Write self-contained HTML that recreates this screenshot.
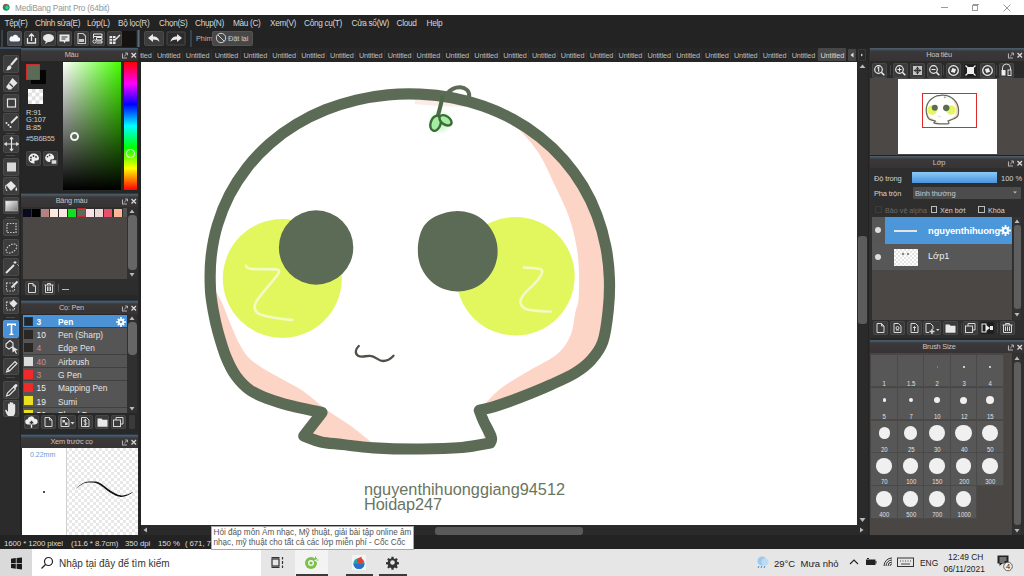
<!DOCTYPE html>
<html><head><meta charset="utf-8"><title>MediBang</title>
<style>
*{margin:0;padding:0;box-sizing:border-box}
html,body{width:1024px;height:576px;overflow:hidden}
body{position:relative;background:#232323;font-family:"Liberation Sans", sans-serif;color:#ddd}
.a{position:absolute}
.t{position:absolute;white-space:nowrap;line-height:1}
.btn{position:absolute;background:#3d3d3d;border-radius:2px;box-shadow:inset 0 0 0 1px rgba(255,255,255,0.07)}
.ph{position:absolute;background:linear-gradient(to bottom,#4d5f6d 0px,#44515c 1.5px,#3b393b 3px,#3a3537 8px,#363434 100%)}
.pht{position:absolute;white-space:nowrap;line-height:1;font-size:7.4px;color:#c4c4c4;text-align:center;letter-spacing:-0.25px}
svg{position:absolute;overflow:visible}
</style></head><body>

<div class="a" style="left:0;top:0;width:1024px;height:15px;background:#fff"></div>
<svg style="left:2px;top:3px" width="10" height="10" viewBox="0 0 10 10"><circle cx="4.2" cy="4.3" r="3.4" fill="#17905a"/><path d="M1 3.5A3.4 3.4 0 0 1 5 .9L4.5 3z" fill="#b84a3c"/><ellipse cx="5" cy="4.5" rx="1.6" ry="1.9" fill="#35c8a4"/></svg>
<div class="t" style="left:15px;top:3.5px;font-size:8.3px;color:#959595;letter-spacing:-0.2px">MediBang Paint Pro (64bit)</div>
<div class="a" style="left:941px;top:7px;width:7px;height:1px;background:#9a9a9a"></div>
<div class="a" style="left:972px;top:5px;width:6px;height:6px;border:1px solid #9a9a9a"></div>
<div class="a" style="left:973px;top:4px;width:6px;height:1px;background:#9a9a9a"></div>
<svg style="left:1003px;top:4px" width="8" height="8"><path d="M0.5 0.5L7.5 7.5M7.5 0.5L0.5 7.5" stroke="#9a9a9a" stroke-width="1"/></svg>
<div class="t" style="left:4.5px;top:19px;font-size:8.3px;color:#d6d6d6;letter-spacing:-0.35px">Tệp(F)</div>
<div class="t" style="left:35px;top:19px;font-size:8.3px;color:#d6d6d6;letter-spacing:-0.35px">Chỉnh sửa(E)</div>
<div class="t" style="left:87px;top:19px;font-size:8.3px;color:#d6d6d6;letter-spacing:-0.35px">Lớp(L)</div>
<div class="t" style="left:118px;top:19px;font-size:8.3px;color:#d6d6d6;letter-spacing:-0.35px">Bộ lọc(R)</div>
<div class="t" style="left:159px;top:19px;font-size:8.3px;color:#d6d6d6;letter-spacing:-0.35px">Chọn(S)</div>
<div class="t" style="left:195px;top:19px;font-size:8.3px;color:#d6d6d6;letter-spacing:-0.35px">Chụp(N)</div>
<div class="t" style="left:233px;top:19px;font-size:8.3px;color:#d6d6d6;letter-spacing:-0.35px">Màu (C)</div>
<div class="t" style="left:270px;top:19px;font-size:8.3px;color:#d6d6d6;letter-spacing:-0.35px">Xem(V)</div>
<div class="t" style="left:304px;top:19px;font-size:8.3px;color:#d6d6d6;letter-spacing:-0.35px">Công cụ(T)</div>
<div class="t" style="left:351.5px;top:19px;font-size:8.3px;color:#d6d6d6;letter-spacing:-0.35px">Cửa sổ(W)</div>
<div class="t" style="left:396.5px;top:19px;font-size:8.3px;color:#d6d6d6;letter-spacing:-0.35px">Cloud</div>
<div class="t" style="left:426.5px;top:19px;font-size:8.3px;color:#d6d6d6;letter-spacing:-0.35px">Help</div>
<div class="a" style="left:1px;top:30px;width:2px;height:17px;background:#34434e"></div>
<div class="btn" style="left:7px;top:31px;width:15px;height:15px;background:#474b52"></div>
<div class="btn" style="left:24px;top:31px;width:15px;height:15px;background:#3b3b3b"></div>
<div class="btn" style="left:40.5px;top:31px;width:15px;height:15px;background:#3b3b3b"></div>
<div class="btn" style="left:57px;top:31px;width:15px;height:15px;background:#3b3b3b"></div>
<div class="btn" style="left:73.5px;top:31px;width:15px;height:15px;background:#3b3b3b"></div>
<div class="btn" style="left:90px;top:31px;width:15px;height:15px;background:#3b3b3b"></div>
<div class="btn" style="left:106.5px;top:31px;width:15px;height:15px;background:#3b3b3b"></div>
<svg style="left:7px;top:31px" width="15" height="15"><path d="M4.5 10.5h6.5a2.1 2.1 0 0 0 .2-4.2 3 3 0 0 0-5.6-.9A2.6 2.6 0 0 0 4.5 10.5z" fill="#f4f8ff"/></svg>
<svg style="left:24px;top:31px" width="15" height="15" fill="none" stroke="#e8e8e8" stroke-width="1.3"><path d="M3.5 7v5h8V7M7.5 10V3M5 5.5l2.5-2.5 2.5 2.5"/></svg>
<svg style="left:40.5px;top:31px" width="15" height="15"><ellipse cx="7.5" cy="7" rx="5.5" ry="4" fill="#e8e8e8"/><path d="M5 10l-1 3 3-2z" fill="#e8e8e8"/></svg>
<svg style="left:57px;top:31px" width="15" height="15"><path d="M2.5 3.5h10v7h-4l-1 2-1-2h-4z" fill="#e8e8e8"/><path d="M4.5 6h6M4.5 8h4" stroke="#3b3b3b" stroke-width="1"/></svg>
<svg style="left:73.5px;top:31px" width="15" height="15" fill="none" stroke="#c8c8c8" stroke-width="1.1"><path d="M4 2.5h5l2.5 2.5v7.5H4z"/><path d="M5.5 8.5h4v2h-4z" fill="#c8c8c8"/></svg>
<svg style="left:90px;top:31px" width="15" height="15" fill="none" stroke="#e8e8e8" stroke-width="1"><path d="M3.5 3h8.5v2.5H3.5zM6.5 6.5h5.5V9H6.5zM6.5 10h5.5v2H6.5M3.5 5.5v2"/><circle cx="4.5" cy="10.5" r="1.6"/></svg>
<svg style="left:106.5px;top:31px" width="15" height="15"><path d="M2.5 5h6v8h-6z" fill="#e8e8e8"/><path d="M2.5 7.5h6M2.5 10.2h6M5.5 5v8" stroke="#3b3b3b" stroke-width="0.8"/><path d="M8 9l5-5" stroke="#e8e8e8" stroke-width="1.5"/></svg>
<div class="a" style="left:122px;top:30.7px;width:14px;height:16px;background:#141312"></div>
<div class="a" style="left:136.5px;top:30px;width:3px;height:17px;background:linear-gradient(to right,#2c3a40,#5a6e78,#2c3a44)"></div>
<div class="btn" style="left:144px;top:31px;width:20px;height:15px;background:#3d3d3d"></div>
<div class="btn" style="left:166px;top:31px;width:20px;height:15px;background:#2c2c2c;border:1px solid #383838"></div>
<svg style="left:144px;top:31px" width="20" height="15"><path d="M4 7l5-4v2.5c4 0 6 2 6.5 5.5-1.5-2-3.5-2.6-6.5-2.6V11z" fill="#ececec"/></svg>
<svg style="left:166px;top:31px" width="20" height="15"><path d="M16 7l-5-4v2.5c-4 0-6 2-6.5 5.5 1.5-2 3.5-2.6 6.5-2.6V11z" fill="#ececec"/></svg>
<div class="a" style="left:190px;top:30px;width:2px;height:17px;background:#34434e"></div>
<div class="t" style="left:196px;top:35px;font-size:7.4px;color:#b8b8b8;letter-spacing:-0.2px">Phím</div>
<div class="btn" style="left:212px;top:31px;width:41px;height:15px;background:#484848"></div>
<svg style="left:215px;top:32px" width="12" height="12" fill="none" stroke="#d0d0d0" stroke-width="1"><circle cx="6" cy="6" r="4.7"/><path d="M2.7 2.7l6.6 6.6"/></svg>
<div class="t" style="left:228px;top:35px;font-size:7.6px;color:#c8c8c8;letter-spacing:-0.2px">Đặt lại</div>
<div class="a" style="left:140px;top:48px;width:729px;height:14px;background:#262626"></div>
<div class="a" style="left:817.5px;top:48px;width:28px;height:13px;background:#474747;border-radius:1px"></div>
<div class="a" style="left:816.65px;top:50px;width:1px;height:10px;background:#303030"></div>
<div class="a" style="left:787.8px;top:50px;width:1px;height:10px;background:#303030"></div>
<div class="a" style="left:758.9499999999999px;top:50px;width:1px;height:10px;background:#303030"></div>
<div class="a" style="left:730.0999999999999px;top:50px;width:1px;height:10px;background:#303030"></div>
<div class="a" style="left:701.2499999999999px;top:50px;width:1px;height:10px;background:#303030"></div>
<div class="a" style="left:672.3999999999999px;top:50px;width:1px;height:10px;background:#303030"></div>
<div class="a" style="left:643.5499999999998px;top:50px;width:1px;height:10px;background:#303030"></div>
<div class="a" style="left:614.6999999999998px;top:50px;width:1px;height:10px;background:#303030"></div>
<div class="a" style="left:585.8499999999998px;top:50px;width:1px;height:10px;background:#303030"></div>
<div class="a" style="left:556.9999999999998px;top:50px;width:1px;height:10px;background:#303030"></div>
<div class="a" style="left:528.1499999999997px;top:50px;width:1px;height:10px;background:#303030"></div>
<div class="a" style="left:499.2999999999997px;top:50px;width:1px;height:10px;background:#303030"></div>
<div class="a" style="left:470.4499999999997px;top:50px;width:1px;height:10px;background:#303030"></div>
<div class="a" style="left:441.5999999999997px;top:50px;width:1px;height:10px;background:#303030"></div>
<div class="a" style="left:412.74999999999966px;top:50px;width:1px;height:10px;background:#303030"></div>
<div class="a" style="left:383.89999999999964px;top:50px;width:1px;height:10px;background:#303030"></div>
<div class="a" style="left:355.0499999999996px;top:50px;width:1px;height:10px;background:#303030"></div>
<div class="a" style="left:326.1999999999996px;top:50px;width:1px;height:10px;background:#303030"></div>
<div class="a" style="left:297.34999999999957px;top:50px;width:1px;height:10px;background:#303030"></div>
<div class="a" style="left:268.49999999999955px;top:50px;width:1px;height:10px;background:#303030"></div>
<div class="a" style="left:239.64999999999958px;top:50px;width:1px;height:10px;background:#303030"></div>
<div class="a" style="left:210.79999999999959px;top:50px;width:1px;height:10px;background:#303030"></div>
<div class="a" style="left:181.9499999999996px;top:50px;width:1px;height:10px;background:#303030"></div>
<div class="a" style="left:153.0999999999996px;top:50px;width:1px;height:10px;background:#303030"></div>
<div class="a" style="left:140px;top:48px;width:707px;height:14px;overflow:hidden"><div class="t" style="left:680.5px;top:4px;font-size:7.3px;color:#d4d4d4;letter-spacing:-0.15px">Untitled</div><div class="t" style="left:651.65px;top:4px;font-size:7.3px;color:#bdbdbd;letter-spacing:-0.15px">Untitled</div><div class="t" style="left:622.8px;top:4px;font-size:7.3px;color:#bdbdbd;letter-spacing:-0.15px">Untitled</div><div class="t" style="left:593.9499999999999px;top:4px;font-size:7.3px;color:#bdbdbd;letter-spacing:-0.15px">Untitled</div><div class="t" style="left:565.0999999999999px;top:4px;font-size:7.3px;color:#bdbdbd;letter-spacing:-0.15px">Untitled</div><div class="t" style="left:536.2499999999999px;top:4px;font-size:7.3px;color:#bdbdbd;letter-spacing:-0.15px">Untitled</div><div class="t" style="left:507.39999999999986px;top:4px;font-size:7.3px;color:#bdbdbd;letter-spacing:-0.15px">Untitled</div><div class="t" style="left:478.54999999999984px;top:4px;font-size:7.3px;color:#bdbdbd;letter-spacing:-0.15px">Untitled</div><div class="t" style="left:449.6999999999998px;top:4px;font-size:7.3px;color:#bdbdbd;letter-spacing:-0.15px">Untitled</div><div class="t" style="left:420.8499999999998px;top:4px;font-size:7.3px;color:#bdbdbd;letter-spacing:-0.15px">Untitled</div><div class="t" style="left:391.9999999999998px;top:4px;font-size:7.3px;color:#bdbdbd;letter-spacing:-0.15px">Untitled</div><div class="t" style="left:363.14999999999975px;top:4px;font-size:7.3px;color:#bdbdbd;letter-spacing:-0.15px">Untitled</div><div class="t" style="left:334.2999999999997px;top:4px;font-size:7.3px;color:#bdbdbd;letter-spacing:-0.15px">Untitled</div><div class="t" style="left:305.4499999999997px;top:4px;font-size:7.3px;color:#bdbdbd;letter-spacing:-0.15px">Untitled</div><div class="t" style="left:276.5999999999997px;top:4px;font-size:7.3px;color:#bdbdbd;letter-spacing:-0.15px">Untitled</div><div class="t" style="left:247.74999999999966px;top:4px;font-size:7.3px;color:#bdbdbd;letter-spacing:-0.15px">Untitled</div><div class="t" style="left:218.89999999999964px;top:4px;font-size:7.3px;color:#bdbdbd;letter-spacing:-0.15px">Untitled</div><div class="t" style="left:190.0499999999996px;top:4px;font-size:7.3px;color:#bdbdbd;letter-spacing:-0.15px">Untitled</div><div class="t" style="left:161.1999999999996px;top:4px;font-size:7.3px;color:#bdbdbd;letter-spacing:-0.15px">Untitled</div><div class="t" style="left:132.34999999999957px;top:4px;font-size:7.3px;color:#bdbdbd;letter-spacing:-0.15px">Untitled</div><div class="t" style="left:103.49999999999957px;top:4px;font-size:7.3px;color:#bdbdbd;letter-spacing:-0.15px">Untitled</div><div class="t" style="left:74.64999999999958px;top:4px;font-size:7.3px;color:#bdbdbd;letter-spacing:-0.15px">Untitled</div><div class="t" style="left:45.799999999999585px;top:4px;font-size:7.3px;color:#bdbdbd;letter-spacing:-0.15px">Untitled</div><div class="t" style="left:16.94999999999959px;top:4px;font-size:7.3px;color:#bdbdbd;letter-spacing:-0.15px">Untitled</div><div class="t" style="left:-11.900000000000404px;top:4px;font-size:7.3px;color:#bdbdbd;letter-spacing:-0.15px">Untitled</div></div>
<div class="a" style="left:847.5px;top:49px;width:8px;height:11.5px;background:#464646;border-radius:1px"></div>
<svg style="left:847.5px;top:49px" width="8" height="12"><path d="M5.5 3.5v5L2.5 6z" fill="#e0e0e0"/></svg>
<div class="a" style="left:858px;top:49px;width:8px;height:11.5px;background:#2a2a2a;border:1px solid #3a3a3a;border-radius:1px"></div>
<svg style="left:858px;top:49px" width="8" height="12"><path d="M3 4.5v3L5 6z" fill="#d0d0d0"/></svg>
<div class="a" style="left:141px;top:62px;width:716px;height:463px;background:#fff"></div>
<div class="a" style="left:857px;top:62px;width:11px;height:463px;background:#2a2a2a"></div>
<svg style="left:857px;top:62px" width="11" height="8"><path d="M2.5 6h6L5.5 2.5z" fill="#bbb"/></svg>
<div class="a" style="left:858px;top:235.5px;width:8.5px;height:88.5px;background:#5c5c5c;border-radius:3px"></div>
<svg style="left:857px;top:514px" width="11" height="11"><path d="M2.5 4h6L5.5 8z" fill="#bbb"/></svg>
<div class="a" style="left:141px;top:525px;width:727px;height:10px;background:#2a2a2a"></div>
<svg style="left:141px;top:525px" width="8" height="10"><path d="M6 2.5v5L2.5 5z" fill="#bbb"/></svg>
<div class="a" style="left:435px;top:526.5px;width:148px;height:8px;background:#5a5a5a;border-radius:3px"></div>
<svg style="left:857px;top:525px" width="11" height="10"><path d="M3 2.5v5L6.5 5z" fill="#bbb"/></svg>
<div class="a" style="left:0;top:47px;width:21px;height:1.5px;background:#3f5060"></div>
<div class="a" style="left:0;top:48.5px;width:20px;height:486px;background:#2b2b2b"></div>
<div class="btn" style="left:2.5px;top:55px;width:16.5px;height:17.5px;background:#3d3d3d;border-radius:2px"></div>
<div class="btn" style="left:2.5px;top:74.8px;width:16.5px;height:17.5px;background:#3d3d3d;border-radius:2px"></div>
<div class="btn" style="left:2.5px;top:94px;width:16.5px;height:17.5px;background:#3d3d3d;border-radius:2px"></div>
<div class="btn" style="left:2.5px;top:113px;width:16.5px;height:17.5px;background:#3d3d3d;border-radius:2px"></div>
<div class="btn" style="left:2.5px;top:135px;width:16.5px;height:17.5px;background:#3d3d3d;border-radius:2px"></div>
<div class="btn" style="left:2.5px;top:158px;width:16.5px;height:17.5px;background:#3d3d3d;border-radius:2px"></div>
<div class="btn" style="left:2.5px;top:177px;width:16.5px;height:17.5px;background:#3d3d3d;border-radius:2px"></div>
<div class="btn" style="left:2.5px;top:196.5px;width:16.5px;height:17.5px;background:#3d3d3d;border-radius:2px"></div>
<div class="btn" style="left:2.5px;top:218.5px;width:16.5px;height:17.5px;background:#3d3d3d;border-radius:2px"></div>
<div class="btn" style="left:2.5px;top:238.5px;width:16.5px;height:17.5px;background:#3d3d3d;border-radius:2px"></div>
<div class="btn" style="left:2.5px;top:258px;width:16.5px;height:17.5px;background:#3d3d3d;border-radius:2px"></div>
<div class="btn" style="left:2.5px;top:277.5px;width:16.5px;height:17.5px;background:#3d3d3d;border-radius:2px"></div>
<div class="btn" style="left:2.5px;top:296.7px;width:16.5px;height:17.5px;background:#3d3d3d;border-radius:2px"></div>
<div class="btn" style="left:2.5px;top:320px;width:16.5px;height:17.5px;background:#4a90d6;border-radius:2px"></div>
<div class="btn" style="left:2.5px;top:338px;width:16.5px;height:17.5px;background:#3d3d3d;border-radius:2px"></div>
<div class="btn" style="left:2.5px;top:357.8px;width:16.5px;height:17.5px;background:#3d3d3d;border-radius:2px"></div>
<div class="btn" style="left:2.5px;top:381px;width:16.5px;height:17.5px;background:#3d3d3d;border-radius:2px"></div>
<div class="btn" style="left:2.5px;top:399.5px;width:16.5px;height:17.5px;background:#3d3d3d;border-radius:2px"></div>
<div class="a" style="left:6px;top:132.5px;width:9px;height:1px;background:#4a4a4a"></div>
<div class="a" style="left:6px;top:155.3px;width:9px;height:1px;background:#4a4a4a"></div>
<div class="a" style="left:6px;top:216.5px;width:9px;height:1px;background:#4a4a4a"></div>
<div class="a" style="left:6px;top:316.5px;width:9px;height:1px;background:#4a4a4a"></div>
<div class="a" style="left:6px;top:377px;width:9px;height:1px;background:#4a4a4a"></div>
<svg style="left:2.5px;top:55px" width="17" height="18" viewBox="0 0 17 18"><path d="M14 3L8 10" stroke="#e6e6e6" stroke-width="2"/><path d="M7.5 10.2c-2 0-3.5 1.2-3.5 3.6 0 .5-.7.9-1.3 1.1 2.4.8 5.5-.2 5.8-2.3z" fill="#e6e6e6"/></svg>
<svg style="left:2.5px;top:74.8px" width="17" height="18" viewBox="0 0 17 18"><path d="M9.5 3l5 5-6.5 6.5H5.5L3 12z" fill="#e6e6e6"/><path d="M6.5 8.5l3.5 3.5" stroke="#3d3d3d" stroke-width="1.3"/></svg>
<svg style="left:2.5px;top:94px" width="17" height="18" viewBox="0 0 17 18"><rect x="4.5" y="5" width="8" height="8" fill="none" stroke="#e6e6e6" stroke-width="1.2"/></svg>
<svg style="left:2.5px;top:113px" width="17" height="18" viewBox="0 0 17 18"><path d="M14.5 3.5L8 10" stroke="#e6e6e6" stroke-width="1.8"/><circle cx="3.5" cy="10" r="1" fill="#e6e6e6"/><circle cx="5.5" cy="12" r="1" fill="#e6e6e6"/><circle cx="7.5" cy="14" r="1" fill="#e6e6e6"/></svg>
<svg style="left:2.5px;top:135px" width="17" height="18" viewBox="0 0 17 18"><path d="M8.5 2v14M1.5 9h14" stroke="#e6e6e6" stroke-width="1.2"/><path d="M8.5 1.5l-2.3 2.8h4.6zM8.5 16.5l-2.3-2.8h4.6zM1 9l2.8-2.3v4.6zM16 9l-2.8-2.3v4.6z" fill="#e6e6e6"/></svg>
<svg style="left:2.5px;top:158px" width="17" height="18" viewBox="0 0 17 18"><rect x="4" y="4.5" width="9" height="9" fill="#d8d8d8"/></svg>
<svg style="left:2.5px;top:177px" width="17" height="18" viewBox="0 0 17 18"><path d="M3 8l5-4 5 5-5 5z" fill="#e6e6e6"/><path d="M3 8c-1 3 0 4 1 6" stroke="#e6e6e6" stroke-width="1" fill="none"/><path d="M13 10c1 1 1.5 2.5 1 3.5-.6.8-1.6.2-1.6-.8z" fill="#e6e6e6"/></svg>
<svg style="left:2.5px;top:196.5px" width="17" height="18" viewBox="0 0 17 18"><defs><linearGradient id="gr1" x1="0" y1="0" x2="1" y2="1"><stop offset="0" stop-color="#fafafa"/><stop offset="1" stop-color="#777"/></linearGradient></defs><rect x="2.5" y="4" width="12" height="10" fill="url(#gr1)" stroke="#bbb" stroke-width=".6"/></svg>
<svg style="left:2.5px;top:218.5px" width="17" height="18" viewBox="0 0 17 18"><rect x="4" y="4.5" width="9" height="9" fill="none" stroke="#cfcfcf" stroke-width="1.2" stroke-dasharray="1.5 1.3"/></svg>
<svg style="left:2.5px;top:238.5px" width="17" height="18" viewBox="0 0 17 18"><ellipse cx="8.5" cy="9.5" rx="6" ry="3.6" transform="rotate(-35 8.5 9.5)" fill="none" stroke="#cfcfcf" stroke-width="1.1" stroke-dasharray="1.5 1.2"/></svg>
<svg style="left:2.5px;top:258px" width="17" height="18" viewBox="0 0 17 18"><path d="M3 15l8-8" stroke="#e6e6e6" stroke-width="1.8"/><path d="M12 3v3M10.5 4.5h3M14.5 6.5l1 1" stroke="#e6e6e6" stroke-width="1"/></svg>
<svg style="left:2.5px;top:277.5px" width="17" height="18" viewBox="0 0 17 18"><rect x="3.5" y="5" width="8" height="8" fill="none" stroke="#cfcfcf" stroke-width="1.1" stroke-dasharray="1.5 1.3"/><path d="M14.5 3.5L8.5 9.5" stroke="#e6e6e6" stroke-width="1.8"/></svg>
<svg style="left:2.5px;top:296.7px" width="17" height="18" viewBox="0 0 17 18"><rect x="3.5" y="5" width="8" height="8" fill="none" stroke="#cfcfcf" stroke-width="1.1" stroke-dasharray="1.5 1.3"/><path d="M10.5 2.5l4 4-4 4-4-4z" fill="#e6e6e6"/></svg>
<svg style="left:2.5px;top:320px" width="17" height="18" viewBox="0 0 17 18"><path d="M4 3.5h9v2.5h-1.2l-.4-1H9.3v8.5l1.3.4V15H6.4v-1.1l1.3-.4V5H5.6l-.4 1H4z" fill="#fff"/></svg>
<svg style="left:2.5px;top:338px" width="17" height="18" viewBox="0 0 17 18"><path d="M3 6l4-3.5 3 2.5v3.5L6 11 3 9z" fill="none" stroke="#e6e6e6" stroke-width="1.1"/><path d="M9 8l6 4-2.5.5 1.5 3-1 .5-1.5-3-2 1.5z" fill="#e6e6e6"/></svg>
<svg style="left:2.5px;top:357.8px" width="17" height="18" viewBox="0 0 17 18"><path d="M3.5 14l1-3L12 3.5l2 2L6.5 13z" fill="none" stroke="#e6e6e6" stroke-width="1.1"/><path d="M4.5 11l2 2" stroke="#e6e6e6" stroke-width="1.1"/></svg>
<svg style="left:2.5px;top:381px" width="17" height="18" viewBox="0 0 17 18"><path d="M3.5 15l1-3 6-6 2 2-6 6z" fill="none" stroke="#e6e6e6" stroke-width="1.1"/><path d="M10 5.5l2-2a1.4 1.4 0 0 1 2 2l-2 2z" fill="#e6e6e6"/></svg>
<svg style="left:2.5px;top:399.5px" width="17" height="18" viewBox="0 0 17 18"><path d="M5 16c-1.5-2-2.5-4-2.8-5.5-.2-.8.8-1.2 1.3-.5L5 12V4.5a.9.9 0 0 1 1.8 0V9V2.8a.9.9 0 0 1 1.8 0V9V3.5a.9.9 0 0 1 1.8 0V9.5V5a.9.9 0 0 1 1.8 0v6.5c0 2-.8 3.5-1.8 4.5z" fill="#e6e6e6"/></svg>
<div class="a" style="left:21px;top:48px;width:118px;height:487px;background:#282828"></div>
<div class="ph" style="left:21px;top:48px;width:117px;height:12.5px"></div>
<div class="pht" style="left:21px;top:51px;width:101px">Màu</div>
<svg style="left:121px;top:51.5px" width="16" height="7"><path d="M1.5 1.5v4.5h4.5" fill="none" stroke="#b0b0b0" stroke-width="1.1"/><path d="M3.2 4.3L6 1.5M4.2 1h2.3v2.3" fill="none" stroke="#b0b0b0" stroke-width="1"/><path d="M10.5 1l4.5 4.5M15 1l-4.5 4.5" stroke="#d8d8d8" stroke-width="1.3"/></svg>
<div class="a" style="left:21px;top:61px;width:117px;height:132px;background:#262626"></div>
<div class="a" style="left:31px;top:70px;width:14.5px;height:14px;background:#050505"></div>
<div class="a" style="left:25.5px;top:64px;width:14.5px;height:15.5px;background:#5b6b55;border:1.5px solid #d02a2a"></div>
<div class="a" style="left:28px;top:89px;width:15px;height:15px;background:#fff;background-image:linear-gradient(45deg,#ddd 25%,transparent 25%,transparent 75%,#ddd 75%),linear-gradient(45deg,#ddd 25%,transparent 25%,transparent 75%,#ddd 75%);background-size:7.5px 7.5px;background-position:0 0,3.75px 3.75px"></div>
<div class="t" style="left:26px;top:108.7px;font-size:7.5px;color:#d2d2d2;letter-spacing:-0.1px">R:91</div>
<div class="t" style="left:26px;top:116.2px;font-size:7.5px;color:#d2d2d2;letter-spacing:-0.1px">G:107</div>
<div class="t" style="left:26px;top:123.7px;font-size:7.5px;color:#d2d2d2;letter-spacing:-0.1px">B:85</div>
<div class="t" style="left:26px;top:135.3px;font-size:7.3px;color:#c4c4c4;letter-spacing:-0.2px">#5B6B55</div>
<div class="btn" style="left:26px;top:151px;width:15px;height:14.5px;background:#3a3a3a"></div>
<div class="btn" style="left:42.5px;top:151px;width:15px;height:14.5px;background:#3a3a3a"></div>
<svg style="left:26px;top:151px" width="15" height="15"><path d="M7.5 2.5a5 5 0 0 0 0 10c1 0 1.3-.6 1-1.3-.4-.8.1-1.6 1-1.6h1.2a2.3 2.3 0 0 0 2.3-2.3c0-2.7-2.4-4.8-5.5-4.8z" fill="#eee"/><circle cx="5" cy="6.5" r=".9" fill="#333"/><circle cx="7.5" cy="5" r=".9" fill="#333"/><circle cx="10" cy="6" r=".9" fill="#333"/><circle cx="4.8" cy="9" r=".9" fill="#333"/></svg>
<svg style="left:42.5px;top:151px" width="15" height="15"><path d="M6.5 2.5a4.3 4.3 0 0 0 0 8.6c.8 0 1-.5.8-1.1-.3-.7.1-1.4.9-1.4h1a2 2 0 0 0 2-2c0-2.3-2-4.1-4.7-4.1z" fill="#eee"/><circle cx="4.5" cy="5.8" r=".8" fill="#333"/><circle cx="6.6" cy="4.4" r=".8" fill="#333"/><rect x="8.5" y="9" width="5" height="4" fill="#ddd" stroke="#555" stroke-width=".6"/></svg>
<div class="a" style="left:62.5px;top:62px;width:58.5px;height:128px;background:linear-gradient(to bottom,rgba(0,0,0,0),#000),linear-gradient(to right,#fff,#45ff00)"></div>
<div class="a" style="left:69.5px;top:131.8px;width:9px;height:9px;border:2px solid #f4f4f4;border-radius:50%"></div>
<div class="a" style="left:124px;top:62px;width:13px;height:128px;background:linear-gradient(to bottom,#ff0000 0%,#ff00ff 17%,#0000ff 33%,#00ffff 50%,#00ff00 67%,#ffff00 83%,#ff0000 100%)"></div>
<div class="a" style="left:126px;top:149px;width:8.5px;height:8.5px;border:1.5px solid #eee;border-radius:50%"></div>
<div class="a" style="left:21px;top:193px;width:117px;height:1px;background:#2a3a48"></div>
<div class="ph" style="left:21px;top:194px;width:117px;height:12.5px"></div>
<div class="pht" style="left:21px;top:197px;width:101px">Bảng màu</div>
<svg style="left:121px;top:197.5px" width="16" height="7"><path d="M1.5 1.5v4.5h4.5" fill="none" stroke="#b0b0b0" stroke-width="1.1"/><path d="M3.2 4.3L6 1.5M4.2 1h2.3v2.3" fill="none" stroke="#b0b0b0" stroke-width="1"/><path d="M10.5 1l4.5 4.5M15 1l-4.5 4.5" stroke="#d8d8d8" stroke-width="1.3"/></svg>
<div class="a" style="left:21px;top:206.5px;width:117px;height:88px;background:#2d2d2d"></div>
<div class="a" style="left:22.5px;top:217px;width:104px;height:61.5px;background:#4b4745"></div>
<div class="a" style="left:23.0px;top:208.5px;width:8px;height:8.3px;background:#0a0a1e"></div>
<div class="a" style="left:32.05px;top:208.5px;width:8px;height:8.3px;background:#000000"></div>
<div class="a" style="left:41.1px;top:208.5px;width:8px;height:8.3px;background:#b48282"></div>
<div class="a" style="left:50.150000000000006px;top:208.5px;width:8px;height:8.3px;background:#ffe8dc"></div>
<div class="a" style="left:59.2px;top:208.5px;width:8px;height:8.3px;background:#ffe4e4"></div>
<div class="a" style="left:68.25px;top:208.5px;width:8px;height:8.3px;background:#10e020"></div>
<div class="a" style="left:77.30000000000001px;top:208px;width:8.5px;height:9px;background:#5b6b55;border:1px solid #c02a2a"></div>
<div class="a" style="left:86.35000000000001px;top:208.5px;width:8px;height:8.3px;background:#ffe0e6"></div>
<div class="a" style="left:95.4px;top:208.5px;width:8px;height:8.3px;background:#ead8d8"></div>
<div class="a" style="left:104.45px;top:208.5px;width:8px;height:8.3px;background:#e8506a"></div>
<div class="a" style="left:113.5px;top:208.5px;width:8px;height:8.3px;background:#ffb894"></div>
<div class="a" style="left:122.5px;top:208px;width:4px;height:9px;background:#555"></div>
<div class="a" style="left:127px;top:207px;width:10px;height:72px;background:#303030"></div>
<svg style="left:127px;top:207px" width="10" height="8"><path d="M2.5 6h5L5 2.5z" fill="#bbb"/></svg>
<div class="a" style="left:127.8px;top:215px;width:9px;height:55px;background:#666;border-radius:4px"></div>
<svg style="left:127px;top:271px" width="10" height="8"><path d="M2.5 2h5L5 5.5z" fill="#bbb"/></svg>
<div class="btn" style="left:25px;top:281px;width:13.5px;height:13.5px;background:#3b3b3b"></div>
<div class="btn" style="left:41.5px;top:281px;width:13.5px;height:13.5px;background:#3b3b3b"></div>
<svg style="left:25px;top:281px" width="14" height="14" fill="none" stroke="#d8d8d8" stroke-width="1"><path d="M3.5 2.5h4.5l2.5 2.5v6.5h-7z"/><path d="M8 2.5V5h2.5"/></svg>
<svg style="left:41.5px;top:281px" width="14" height="14" fill="none" stroke="#d8d8d8" stroke-width="1"><path d="M2.5 4h9M5.5 4V2.5h3V4M3.5 4v7.5h7V4M5.5 5.5v4.5M7 5.5v4.5M8.5 5.5v4.5"/></svg>
<div class="a" style="left:58px;top:284px;width:1px;height:8px;background:#555"></div>
<div class="a" style="left:62px;top:289px;width:7px;height:1px;background:#bbb"></div>
<div class="a" style="left:21px;top:299.5px;width:117px;height:1.5px;background:#2a3a48"></div>
<div class="ph" style="left:21px;top:301px;width:117px;height:12.5px"></div>
<div class="pht" style="left:21px;top:304px;width:101px">Cọ: Pen</div>
<svg style="left:121px;top:304.5px" width="16" height="7"><path d="M1.5 1.5v4.5h4.5" fill="none" stroke="#b0b0b0" stroke-width="1.1"/><path d="M3.2 4.3L6 1.5M4.2 1h2.3v2.3" fill="none" stroke="#b0b0b0" stroke-width="1"/><path d="M10.5 1l4.5 4.5M15 1l-4.5 4.5" stroke="#d8d8d8" stroke-width="1.3"/></svg>
<div class="a" style="left:22.5px;top:314.7px;width:104px;height:98.5px;background:#404040;overflow:hidden">
<div class="a" style="left:0;top:0.0px;width:104px;height:12.6px;background:#4b93d6"></div>
<div class="a" style="left:1.7px;top:2.0px;width:9px;height:9px;background:#262626;border:1px solid #1a3a5a"></div>
<div class="t" style="left:14px;top:3.2px;font-size:8.4px;color:#fff;font-weight:700">3</div>
<div class="t" style="left:35.5px;top:3.2px;font-size:8.4px;color:#fff;font-weight:700">Pen</div>
<div class="a" style="left:0;top:13.3px;width:104px;height:12.6px;background:#555555"></div>
<div class="a" style="left:1.7px;top:15.3px;width:9px;height:9px;background:#2a2626;"></div>
<div class="t" style="left:14px;top:16.5px;font-size:8.4px;color:#eee;font-weight:400">10</div>
<div class="t" style="left:35.5px;top:16.5px;font-size:8.4px;color:#e4e4e4;font-weight:400">Pen (Sharp)</div>
<div class="a" style="left:0;top:26.6px;width:104px;height:12.6px;background:#555555"></div>
<div class="a" style="left:1.7px;top:28.6px;width:9px;height:9px;background:#2a2626;"></div>
<div class="t" style="left:14px;top:29.8px;font-size:8.4px;color:#d88a8a;font-weight:400">4</div>
<div class="t" style="left:35.5px;top:29.8px;font-size:8.4px;color:#e4e4e4;font-weight:400">Edge Pen</div>
<div class="a" style="left:0;top:39.900000000000006px;width:104px;height:12.6px;background:#555555"></div>
<div class="a" style="left:1.7px;top:41.900000000000006px;width:9px;height:9px;background:#dcdcdc;"></div>
<div class="t" style="left:14px;top:43.10000000000001px;font-size:8.4px;color:#d88a8a;font-weight:400">40</div>
<div class="t" style="left:35.5px;top:43.10000000000001px;font-size:8.4px;color:#e4e4e4;font-weight:400">Airbrush</div>
<div class="a" style="left:0;top:53.2px;width:104px;height:12.6px;background:#555555"></div>
<div class="a" style="left:1.7px;top:55.2px;width:9px;height:9px;background:#ee2a2a;"></div>
<div class="t" style="left:14px;top:56.400000000000006px;font-size:8.4px;color:#d88a8a;font-weight:400">3</div>
<div class="t" style="left:35.5px;top:56.400000000000006px;font-size:8.4px;color:#e4e4e4;font-weight:400">G Pen</div>
<div class="a" style="left:0;top:66.5px;width:104px;height:12.6px;background:#555555"></div>
<div class="a" style="left:1.7px;top:68.5px;width:9px;height:9px;background:#ee2a2a;"></div>
<div class="t" style="left:14px;top:69.7px;font-size:8.4px;color:#eee;font-weight:400">15</div>
<div class="t" style="left:35.5px;top:69.7px;font-size:8.4px;color:#e4e4e4;font-weight:400">Mapping Pen</div>
<div class="a" style="left:0;top:79.80000000000001px;width:104px;height:12.6px;background:#555555"></div>
<div class="a" style="left:1.7px;top:81.80000000000001px;width:9px;height:9px;background:#e8e020;"></div>
<div class="t" style="left:14px;top:83.00000000000001px;font-size:8.4px;color:#eee;font-weight:400">19</div>
<div class="t" style="left:35.5px;top:83.00000000000001px;font-size:8.4px;color:#e4e4e4;font-weight:400">Sumi</div>
<div class="a" style="left:0;top:93.10000000000001px;width:104px;height:12.6px;background:#555555"></div>
<div class="a" style="left:1.7px;top:95.10000000000001px;width:9px;height:9px;background:#e8e020;"></div>
<div class="t" style="left:14px;top:96.30000000000001px;font-size:8.4px;color:#eee;font-weight:400">50</div>
<div class="t" style="left:35.5px;top:96.30000000000001px;font-size:8.4px;color:#e4e4e4;font-weight:400">Blend Pen</div>
<svg style="left:93px;top:2px" width="10" height="10"><g fill="#fff"><circle cx="5" cy="5" r="3.2"/><path d="M4.2 0h1.6v2H4.2zM4.2 8h1.6v2H4.2zM0 4.2h2v1.6H0zM8 4.2h2v1.6H8z"/><path d="M1.2 2.3l1.1-1.1 1.4 1.4-1.1 1.1zM6.3 7.4l1.1-1.1 1.4 1.4-1.1 1.1zM1.2 7.7l1.4-1.4 1.1 1.1-1.4 1.4zM6.3 2.6l1.4-1.4 1.1 1.1-1.4 1.4z"/></g><circle cx="5" cy="5" r="1.3" fill="#4b93d6"/></svg>
</div>
<div class="a" style="left:127px;top:314px;width:10px;height:99px;background:#303030"></div>
<svg style="left:127px;top:314px" width="10" height="8"><path d="M2.5 6h5L5 2.5z" fill="#bbb"/></svg>
<div class="a" style="left:127.8px;top:322px;width:9px;height:33px;background:#666;border-radius:4px"></div>
<svg style="left:127px;top:405px" width="10" height="8"><path d="M2.5 2h5L5 5.5z" fill="#bbb"/></svg>
<div class="btn" style="left:24px;top:415px;width:15px;height:14px;background:#3b3b3b"></div>
<div class="btn" style="left:41px;top:415px;width:15px;height:14px;background:#3b3b3b"></div>
<div class="btn" style="left:58px;top:415px;width:18px;height:14px;background:#3b3b3b"></div>
<div class="btn" style="left:78px;top:415px;width:14.5px;height:14px;background:#3b3b3b"></div>
<div class="btn" style="left:94.5px;top:415px;width:14.5px;height:14px;background:#3b3b3b"></div>
<div class="btn" style="left:111px;top:415px;width:14.5px;height:14px;background:#3b3b3b"></div>
<div class="a" style="left:129px;top:415px;width:6px;height:14px;background:#3a3a3a;border-radius:1px"></div>
<svg style="left:24px;top:415px" width="15" height="14"><path d="M4 9.5a2.6 2.6 0 0 1-.4-5.2 3.6 3.6 0 0 1 6.9-.6A2.9 2.9 0 0 1 11 9.5z" fill="#eee"/><path d="M5 8.3l2.5-2.8 2.5 2.8H8.3v1.2H6.7V8.3z" fill="#3b3b3b"/><path d="M6.8 9.5h1.4v3.3H6.8z" fill="#eee"/></svg>
<svg style="left:41px;top:415px" width="15" height="14" fill="none" stroke="#d8d8d8" stroke-width="1"><path d="M4 2.5h4.5L11 5v6.5H4z"/><path d="M8.5 2.5V5H11"/></svg>
<svg style="left:58px;top:415px" width="18" height="14"><path d="M3 2.5h5.5L11 5v6.5H3z" fill="none" stroke="#d8d8d8" stroke-width="1"/><rect x="4.5" y="5" width="2.5" height="2.5" fill="#d8d8d8"/><rect x="7" y="7.5" width="2.5" height="2.5" fill="#d8d8d8"/><path d="M12.5 7h4l-2 2.5z" fill="#d8d8d8"/></svg>
<svg style="left:78px;top:415px" width="15" height="14" fill="none" stroke="#d8d8d8" stroke-width="1"><path d="M3.5 2.5h5L11 5v6.5H3.5z"/><path d="M8.7 5.5c-.5-1-2.8-1-2.8.5s2.9 1 2.9 2.6c0 1.5-2.5 1.5-3 .4M7.3 3.8v7"/></svg>
<svg style="left:94.5px;top:415px" width="15" height="14"><path d="M2.5 3.5h4l1 1.2h5v7h-10z" fill="#e8e8e8"/></svg>
<svg style="left:111px;top:415px" width="15" height="14" fill="none" stroke="#d8d8d8" stroke-width="1"><rect x="2.5" y="5" width="7" height="6.5"/><path d="M5 5V2.5h7v6.5H9.5"/></svg>
<div class="a" style="left:21px;top:433.5px;width:117px;height:1.5px;background:#2a3a48"></div>
<div class="ph" style="left:21px;top:435px;width:117px;height:12.5px"></div>
<div class="pht" style="left:21px;top:438px;width:101px">Xem trước cọ</div>
<svg style="left:121px;top:438.5px" width="16" height="7"><path d="M1.5 1.5v4.5h4.5" fill="none" stroke="#b0b0b0" stroke-width="1.1"/><path d="M3.2 4.3L6 1.5M4.2 1h2.3v2.3" fill="none" stroke="#b0b0b0" stroke-width="1"/><path d="M10.5 1l4.5 4.5M15 1l-4.5 4.5" stroke="#d8d8d8" stroke-width="1.3"/></svg>
<div class="a" style="left:21.5px;top:448px;width:45px;height:87px;background:#fff"></div>
<div class="a" style="left:66px;top:448px;width:72px;height:87px;background-color:#fff;background-image:linear-gradient(45deg,#e8e8e8 25%,transparent 25%,transparent 75%,#e8e8e8 75%),linear-gradient(45deg,#e8e8e8 25%,transparent 25%,transparent 75%,#e8e8e8 75%);background-size:6px 6px;background-position:0 0,3px 3px"></div>
<div class="a" style="left:66px;top:448px;width:1px;height:87px;background:#d0d0d0"></div>
<div class="t" style="left:30px;top:451px;font-size:7px;color:#6a9ed0">0.22mm</div>
<div class="a" style="left:43px;top:490.7px;width:2px;height:2px;background:#111;border-radius:50%"></div>
<svg style="left:0;top:0" width="1024" height="576"><path d="M76.1 488.6 L76.5 488.3 L76.9 488.0 L77.5 487.5 L78.1 487.0 L78.8 486.5 L79.6 486.0 L80.3 485.4 L81.1 484.9 L81.9 484.4 L82.7 484.0 L83.4 483.6 L84.1 483.3 L84.8 483.1 L85.6 482.9 L86.3 482.8 L87.1 482.7 L87.8 482.6 L88.6 482.5 L89.4 482.5 L90.1 482.5 L90.9 482.5 L91.6 482.5 L92.3 482.6 L93.0 482.6 L93.6 482.7 L94.2 482.8 L94.7 482.8 L95.2 482.9 L95.7 483.0 L96.2 483.2 L96.7 483.3 L97.2 483.5 L97.7 483.7 L98.3 484.0 L98.9 484.4 L99.6 484.7 L100.3 485.2 L101.1 485.7 L102.0 486.4 L102.9 487.1 L103.9 487.8 L104.8 488.6 L105.8 489.4 L106.8 490.1 L107.8 490.9 L108.7 491.6 L109.6 492.2 L110.5 492.8 L111.4 493.3 L112.2 493.7 L113.0 494.2 L113.8 494.6 L114.6 495.0 L115.4 495.4 L116.2 495.7 L116.9 496.0 L117.7 496.2 L118.4 496.5 L119.1 496.6 L119.9 496.8 L120.6 496.9 L121.3 496.9 L121.9 496.9 L122.6 496.8 L123.2 496.7 L123.8 496.6 L124.4 496.4 L125.0 496.3 L125.5 496.1 L126.1 495.9 L126.6 495.7 L127.2 495.5 L127.7 495.3 L128.3 495.0 L128.9 494.7 L129.5 494.4 L130.0 494.1 L130.6 493.7 L131.1 493.4 L131.6 493.1 L132.1 492.8 L132.5 492.5 L132.8 492.3 L133.1 492.2 L132.9 491.8 L132.6 492.0 L132.3 492.2 L131.8 492.4 L131.3 492.6 L130.8 492.9 L130.3 493.1 L129.7 493.4 L129.1 493.7 L128.5 493.9 L128.0 494.2 L127.4 494.4 L126.8 494.5 L126.3 494.7 L125.7 494.8 L125.2 494.9 L124.7 495.1 L124.1 495.2 L123.6 495.3 L123.0 495.4 L122.5 495.4 L121.9 495.4 L121.3 495.4 L120.7 495.3 L120.1 495.2 L119.5 495.1 L118.9 494.9 L118.2 494.7 L117.5 494.4 L116.8 494.1 L116.1 493.8 L115.4 493.4 L114.6 493.0 L113.9 492.6 L113.1 492.2 L112.3 491.7 L111.5 491.2 L110.6 490.7 L109.8 490.1 L108.8 489.4 L107.9 488.7 L106.9 487.9 L105.9 487.2 L105.0 486.4 L104.0 485.7 L103.0 485.0 L102.1 484.3 L101.2 483.7 L100.4 483.3 L99.7 482.9 L99.0 482.5 L98.3 482.3 L97.7 482.0 L97.1 481.9 L96.6 481.7 L96.0 481.6 L95.4 481.5 L94.9 481.5 L94.3 481.4 L93.7 481.4 L93.0 481.4 L92.3 481.4 L91.6 481.4 L90.9 481.4 L90.1 481.4 L89.3 481.5 L88.5 481.5 L87.7 481.7 L86.9 481.8 L86.1 482.0 L85.4 482.2 L84.6 482.4 L83.9 482.7 L83.1 483.0 L82.4 483.5 L81.6 484.0 L80.8 484.5 L80.1 485.1 L79.3 485.6 L78.6 486.2 L77.9 486.8 L77.3 487.3 L76.8 487.7 L76.3 488.1 L75.9 488.4Z" fill="#111"/></svg>
<div class="a" style="left:0;top:535px;width:1024px;height:14px;background:#232323"></div>
<div class="t" style="left:4px;top:539.5px;font-size:7.9px;color:#dadada;letter-spacing:-0.12px">1600 * 1200 pixel</div>
<div class="t" style="left:71px;top:539.5px;font-size:7.9px;color:#dadada;letter-spacing:-0.12px">(11.6 * 8.7cm)</div>
<div class="t" style="left:125px;top:539.5px;font-size:7.9px;color:#dadada;letter-spacing:-0.12px">350 dpi</div>
<div class="t" style="left:158px;top:539.5px;font-size:7.9px;color:#dadada;letter-spacing:-0.12px">150 %</div>
<div class="t" style="left:185px;top:539.5px;font-size:7.9px;color:#dadada;letter-spacing:-0.12px">( 671, 7</div>
<div class="a" style="left:869px;top:48px;width:155px;height:487px;background:#2e2e2e"></div>
<div class="ph" style="left:870px;top:48px;width:154px;height:13px"></div>
<div class="pht" style="left:870px;top:51px;width:138px">Hoa tiêu</div>
<svg style="left:1007px;top:51.5px" width="16" height="7"><path d="M1.5 1.5v4.5h4.5" fill="none" stroke="#b0b0b0" stroke-width="1.1"/><path d="M3.2 4.3L6 1.5M4.2 1h2.3v2.3" fill="none" stroke="#b0b0b0" stroke-width="1"/><path d="M10.5 1l4.5 4.5M15 1l-4.5 4.5" stroke="#d8d8d8" stroke-width="1.3"/></svg>
<div class="a" style="left:870px;top:61px;width:154px;height:17px;background:#2a2a2a"></div>
<div class="btn" style="left:872px;top:63px;width:15px;height:14.5px;background:#3b3b3b"></div>
<div class="btn" style="left:893px;top:63px;width:15px;height:14.5px;background:#3b3b3b"></div>
<div class="btn" style="left:910px;top:63px;width:15px;height:14.5px;background:#3b3b3b"></div>
<div class="btn" style="left:927px;top:63px;width:15px;height:14.5px;background:#3b3b3b"></div>
<div class="btn" style="left:946px;top:63px;width:15px;height:14.5px;background:#3b3b3b"></div>
<div class="btn" style="left:963px;top:63px;width:15px;height:14.5px;background:#1f1f1f"></div>
<div class="btn" style="left:980px;top:63px;width:15px;height:14.5px;background:#3b3b3b"></div>
<div class="btn" style="left:999px;top:63px;width:15px;height:14.5px;background:#3b3b3b"></div>
<div class="a" style="left:890px;top:65px;width:1px;height:10px;background:#444"></div>
<div class="a" style="left:943px;top:65px;width:1px;height:10px;background:#444"></div>
<div class="a" style="left:996px;top:65px;width:1px;height:10px;background:#444"></div>
<svg style="left:872px;top:63px" width="15" height="15" fill="none" stroke="#eee"><circle cx="6.5" cy="6.5" r="3.8" stroke-width="1.2"/><path d="M9.3 9.3l3 3" stroke-width="1.6"/><path d="M5.5 5.2l1.2-.8v4.3" stroke-width="1.1"/></svg>
<svg style="left:893px;top:63px" width="15" height="15" fill="none" stroke="#eee"><circle cx="6.5" cy="6.5" r="3.8" stroke-width="1.2"/><path d="M9.3 9.3l3 3" stroke-width="1.6"/><path d="M4.5 6.5h4M6.5 4.5v4" stroke-width="1"/></svg>
<svg style="left:910px;top:63px" width="15" height="15"><rect x="3" y="3" width="9" height="9" fill="#c4c4c4"/><path d="M7.5 3.5l1.6 2.2H8.3v1h1v-.8l2.2 1.6-2.2 1.6v-.8h-1v1h.8L7.5 11.5 5.9 9.3h.8v-1h-1v.8L3.5 7.5l2.2-1.6v.8h1v-1h-.8z" fill="#333"/></svg>
<svg style="left:927px;top:63px" width="15" height="15" fill="none" stroke="#eee"><circle cx="6.5" cy="6.5" r="3.8" stroke-width="1.2"/><path d="M9.3 9.3l3 3" stroke-width="1.6"/><path d="M4.5 6.5h4" stroke-width="1"/></svg>
<svg style="left:946px;top:63px" width="15" height="15"><circle cx="7.5" cy="7.5" r="4.8" fill="none" stroke="#eee" stroke-width="1.3"/><rect x="5.5" y="5.5" width="4" height="4" fill="#eee" transform="rotate(20 7.5 7.5)"/></svg>
<svg style="left:963px;top:63px" width="15" height="15"><rect x="4" y="4" width="7" height="7" fill="#eee"/><path d="M2.5 2.5l2 2M12.5 2.5l-2 2M2.5 12.5l2-2M12.5 12.5l-2-2" stroke="#eee" stroke-width="1.2"/></svg>
<svg style="left:980px;top:63px" width="15" height="15"><circle cx="7.5" cy="7.5" r="4.8" fill="none" stroke="#eee" stroke-width="1.3"/><rect x="5.5" y="5.5" width="4" height="4" fill="#eee" transform="rotate(-20 7.5 7.5)"/></svg>
<svg style="left:999px;top:63px" width="15" height="15"><path d="M3.5 7V5a4 4 0 0 1 8 0v2" fill="none" stroke="#ddd" stroke-width="1"/><rect x="2.5" y="7" width="4" height="5.5" fill="#eee"/><rect x="9" y="7" width="3" height="5.5" fill="none" stroke="#ddd" stroke-width="1"/></svg>
<div class="a" style="left:870px;top:78px;width:154px;height:77px;background:#4b4846"></div>
<div class="a" style="left:898px;top:79px;width:99px;height:75px;background:#fff"></div>
<div class="a" style="left:921.5px;top:92.5px;width:55px;height:35.5px;border:1.3px solid #e02a2a"></div>
<div class="a" style="left:870px;top:155px;width:154px;height:1px;background:#222"></div>
<div class="ph" style="left:870px;top:156px;width:154px;height:12px"></div>
<div class="pht" style="left:870px;top:159px;width:138px">Lớp</div>
<svg style="left:1007px;top:159.5px" width="16" height="7"><path d="M1.5 1.5v4.5h4.5" fill="none" stroke="#b0b0b0" stroke-width="1.1"/><path d="M3.2 4.3L6 1.5M4.2 1h2.3v2.3" fill="none" stroke="#b0b0b0" stroke-width="1"/><path d="M10.5 1l4.5 4.5M15 1l-4.5 4.5" stroke="#d8d8d8" stroke-width="1.3"/></svg>
<div class="t" style="left:874px;top:174.5px;font-size:7.5px;color:#d4d4d4;letter-spacing:-0.15px">Độ trong</div>
<div class="a" style="left:912px;top:172px;width:85px;height:10.5px;background:linear-gradient(to bottom,#8ccaf8,#62a8e8 60%,#4c94dc)"></div>
<div class="t" style="left:1001px;top:174.5px;font-size:7.5px;color:#d4d4d4">100 %</div>
<div class="t" style="left:874px;top:189.5px;font-size:7.5px;color:#d4d4d4;letter-spacing:-0.15px">Pha trộn</div>
<div class="a" style="left:913px;top:187px;width:108px;height:12px;background:#4c4c4c;border-radius:1px"></div>
<div class="t" style="left:915px;top:189.5px;font-size:7.5px;color:#c8c8c8;letter-spacing:-0.15px">Bình thường</div>
<svg style="left:1012px;top:190px" width="6" height="5"><path d="M1 1.5h4L3 3.5z" fill="#bbb"/></svg>
<div class="a" style="left:875px;top:206px;width:6.5px;height:6.5px;border:1px solid #3c3c3c"></div>
<div class="t" style="left:885px;top:206.5px;font-size:7.2px;color:#6a6a6a">Bảo vệ alpha</div>
<div class="a" style="left:930.5px;top:206px;width:6.5px;height:6.5px;border:1px solid #bbb"></div>
<div class="t" style="left:940px;top:206.5px;font-size:7.2px;color:#d4d4d4">Xén bớt</div>
<div class="a" style="left:978px;top:206px;width:6.5px;height:6.5px;border:1px solid #bbb"></div>
<div class="t" style="left:988px;top:206.5px;font-size:7.2px;color:#d4d4d4">Khóa</div>
<div class="a" style="left:871.5px;top:217px;width:140px;height:102.5px;background:#4a4745"></div>
<div class="a" style="left:871.5px;top:217px;width:140px;height:26.5px;background:#565656"></div>
<div class="a" style="left:885px;top:217px;width:126.5px;height:26.5px;background:#4c96da"></div>
<div class="a" style="left:875px;top:227px;width:6px;height:6px;border-radius:50%;background:#ddd"></div>
<div class="a" style="left:894px;top:229.5px;width:23px;height:2px;background:#e4e4e4"></div>
<div class="t" style="left:928px;top:225.5px;font-size:9.4px;color:#fff;font-weight:700;letter-spacing:-0.1px">nguyenthihuong</div>
<svg style="left:1000px;top:225px" width="11" height="11"><g fill="#fff"><circle cx="5.5" cy="5.5" r="3.6"/><path d="M4.6 0h1.8v2.2H4.6zM4.6 8.8h1.8V11H4.6zM0 4.6h2.2v1.8H0zM8.8 4.6H11v1.8H8.8z"/><path d="M1.3 2.5l1.2-1.2 1.6 1.6-1.2 1.2zM6.9 8.1l1.2-1.2 1.6 1.6-1.2 1.2zM1.3 8.5l1.6-1.6 1.2 1.2-1.6 1.6zM6.9 2.9l1.6-1.6 1.2 1.2-1.6 1.6z"/></g><circle cx="5.5" cy="5.5" r="1.5" fill="#4c96da"/></svg>
<div class="a" style="left:871.5px;top:244px;width:140px;height:25.5px;background:#575757"></div>
<div class="a" style="left:875px;top:254px;width:6px;height:6px;border-radius:50%;background:#ddd"></div>
<div class="a" style="left:894px;top:248.5px;width:24px;height:17px;background-color:#fff;background-image:linear-gradient(45deg,#e4e4e4 25%,transparent 25%,transparent 75%,#e4e4e4 75%),linear-gradient(45deg,#e4e4e4 25%,transparent 25%,transparent 75%,#e4e4e4 75%);background-size:4px 4px;background-position:0 0,2px 2px"></div>
<div class="a" style="left:902px;top:253px;width:2px;height:2px;background:#888"></div><div class="a" style="left:907px;top:253px;width:2px;height:2px;background:#888"></div>
<div class="t" style="left:928px;top:252px;font-size:9.2px;color:#eee">Lớp1</div>
<div class="a" style="left:1013px;top:217px;width:8px;height:102.5px;background:#333"></div>
<svg style="left:1013px;top:217px" width="8" height="8"><path d="M1.5 6h5L4 2.5z" fill="#bbb"/></svg>
<div class="a" style="left:1013.5px;top:225px;width:7px;height:84px;background:#5e5e5e;border-radius:3px"></div>
<svg style="left:1013px;top:311px" width="8" height="8"><path d="M1.5 2h5L4 5.5z" fill="#bbb"/></svg>
<div class="btn" style="left:873px;top:321px;width:15px;height:14px;background:#3b3b3b"></div>
<div class="btn" style="left:890px;top:321px;width:15px;height:14px;background:#3b3b3b"></div>
<div class="btn" style="left:907px;top:321px;width:14.5px;height:14px;background:#3b3b3b"></div>
<div class="btn" style="left:923px;top:321px;width:18px;height:14px;background:#3b3b3b"></div>
<div class="btn" style="left:943px;top:321px;width:15px;height:14px;background:#3b3b3b"></div>
<div class="btn" style="left:963px;top:321px;width:15px;height:14px;background:#3b3b3b"></div>
<div class="btn" style="left:980px;top:321px;width:14.5px;height:14px;background:#1e1e1e"></div>
<div class="btn" style="left:1000px;top:321px;width:15px;height:14px;background:#3b3b3b"></div>
<div class="a" style="left:960.5px;top:323px;width:1px;height:10px;background:#444"></div>
<div class="a" style="left:997px;top:323px;width:1px;height:10px;background:#444"></div>
<svg style="left:873px;top:321px" width="15" height="14" fill="none" stroke="#d8d8d8" stroke-width="1"><path d="M4 2.5h4.5L11 5v6.5H4z"/><path d="M8.5 2.5V5H11"/></svg>
<svg style="left:890px;top:321px" width="15" height="14" fill="none" stroke="#d8d8d8" stroke-width="1"><path d="M4 2.5h4.5L11 5v6.5H4z"/><circle cx="7.5" cy="7" r="1.5"/><path d="M6 9h3"/></svg>
<svg style="left:907px;top:321px" width="15" height="14" fill="none" stroke="#d8d8d8" stroke-width="1"><path d="M4 2.5h4.5L11 5v6.5H4z"/><path d="M7.5 10V5.5M6 7l1.5-1.5L9 7"/></svg>
<svg style="left:923px;top:321px" width="18" height="14" fill="none" stroke="#d8d8d8" stroke-width="1"><path d="M3 2.5h4.5L10 5v3M3 2.5v9h3"/><path d="M9 8v5M6.5 10.5h5" stroke-width="1.5"/><path d="M13 8h3.5l-1.7 2z" fill="#d8d8d8" stroke="none"/></svg>
<svg style="left:943px;top:321px" width="15" height="14"><path d="M2.5 3.5h4l1 1.2h5v7h-10z" fill="#e8e8e8"/></svg>
<svg style="left:963px;top:321px" width="15" height="14" fill="none" stroke="#d8d8d8" stroke-width="1"><rect x="2.5" y="5" width="7" height="6.5"/><path d="M5 5V2.5h7v6.5H9.5"/></svg>
<svg style="left:980px;top:321px" width="15" height="14"><rect x="2" y="3" width="4" height="8" fill="none" stroke="#eee" stroke-width="1"/><path d="M6 4l4 3-4 3z" fill="#eee"/><rect x="10" y="5" width="3" height="4" fill="#eee"/></svg>
<svg style="left:1000px;top:321px" width="15" height="14" fill="none" stroke="#d8d8d8" stroke-width="1"><path d="M2.5 4h10M5.5 4V2.5h4V4M3.5 4v7.5h8V4M5.5 5.5v4.5M7.5 5.5v4.5M9.5 5.5v4.5"/></svg>
<div class="a" style="left:870px;top:337.5px;width:154px;height:2px;background:#262626"></div>
<div class="ph" style="left:870px;top:340px;width:154px;height:13px"></div>
<div class="pht" style="left:870px;top:343px;width:138px">Brush Size</div>
<svg style="left:1007px;top:343.5px" width="16" height="7"><path d="M1.5 1.5v4.5h4.5" fill="none" stroke="#b0b0b0" stroke-width="1.1"/><path d="M3.2 4.3L6 1.5M4.2 1h2.3v2.3" fill="none" stroke="#b0b0b0" stroke-width="1"/><path d="M10.5 1l4.5 4.5M15 1l-4.5 4.5" stroke="#d8d8d8" stroke-width="1.3"/></svg>
<div class="a" style="left:870px;top:353px;width:142px;height:182px;background:#4a4644"></div>
<div class="a" style="left:871.0px;top:354.6px;width:26.5px;height:32.9px;background:#575757;border-right:1px solid #4a4a4a;border-bottom:1px solid #4a4a4a"></div>
<div class="t" style="left:871.0px;top:379.6px;width:26.5px;text-align:center;font-size:7px;color:#e0e0e0;transform:scaleX(0.85)">1</div>
<div class="a" style="left:897.5px;top:354.6px;width:26.5px;height:32.9px;background:#575757;border-right:1px solid #4a4a4a;border-bottom:1px solid #4a4a4a"></div>
<div class="a" style="left:910.1px;top:366.5px;width:1.2px;height:1.2px;border-radius:50%;background:#5e5e5e"></div>
<div class="t" style="left:897.5px;top:379.6px;width:26.5px;text-align:center;font-size:7px;color:#e0e0e0;transform:scaleX(0.85)">1.5</div>
<div class="a" style="left:924.0px;top:354.6px;width:26.5px;height:32.9px;background:#575757;border-right:1px solid #4a4a4a;border-bottom:1px solid #4a4a4a"></div>
<div class="a" style="left:936.5px;top:366.40000000000003px;width:1.4px;height:1.4px;border-radius:50%;background:#888"></div>
<div class="t" style="left:924.0px;top:379.6px;width:26.5px;text-align:center;font-size:7px;color:#e0e0e0;transform:scaleX(0.85)">2</div>
<div class="a" style="left:950.5px;top:354.6px;width:26.5px;height:32.9px;background:#575757;border-right:1px solid #4a4a4a;border-bottom:1px solid #4a4a4a"></div>
<div class="a" style="left:962.8000000000001px;top:366.20000000000005px;width:1.8px;height:1.8px;border-radius:50%;background:#f0f0f0"></div>
<div class="t" style="left:950.5px;top:379.6px;width:26.5px;text-align:center;font-size:7px;color:#e0e0e0;transform:scaleX(0.85)">3</div>
<div class="a" style="left:977.0px;top:354.6px;width:26.5px;height:32.9px;background:#575757;border-right:1px solid #4a4a4a;border-bottom:1px solid #4a4a4a"></div>
<div class="a" style="left:989.0px;top:365.90000000000003px;width:2.4px;height:2.4px;border-radius:50%;background:#f0f0f0"></div>
<div class="t" style="left:977.0px;top:379.6px;width:26.5px;text-align:center;font-size:7px;color:#e0e0e0;transform:scaleX(0.85)">4</div>
<div class="a" style="left:871.0px;top:387.55px;width:26.5px;height:32.9px;background:#575757;border-right:1px solid #4a4a4a;border-bottom:1px solid #4a4a4a"></div>
<div class="a" style="left:882.6px;top:398.45px;width:3.2px;height:3.2px;border-radius:50%;background:#f0f0f0"></div>
<div class="t" style="left:871.0px;top:412.55px;width:26.5px;text-align:center;font-size:7px;color:#e0e0e0;transform:scaleX(0.85)">5</div>
<div class="a" style="left:897.5px;top:387.55px;width:26.5px;height:32.9px;background:#575757;border-right:1px solid #4a4a4a;border-bottom:1px solid #4a4a4a"></div>
<div class="a" style="left:908.5px;top:397.85px;width:4.4px;height:4.4px;border-radius:50%;background:#f0f0f0"></div>
<div class="t" style="left:897.5px;top:412.55px;width:26.5px;text-align:center;font-size:7px;color:#e0e0e0;transform:scaleX(0.85)">7</div>
<div class="a" style="left:924.0px;top:387.55px;width:26.5px;height:32.9px;background:#575757;border-right:1px solid #4a4a4a;border-bottom:1px solid #4a4a4a"></div>
<div class="a" style="left:934.2px;top:397.05px;width:6px;height:6px;border-radius:50%;background:#f0f0f0"></div>
<div class="t" style="left:924.0px;top:412.55px;width:26.5px;text-align:center;font-size:7px;color:#e0e0e0;transform:scaleX(0.85)">10</div>
<div class="a" style="left:950.5px;top:387.55px;width:26.5px;height:32.9px;background:#575757;border-right:1px solid #4a4a4a;border-bottom:1px solid #4a4a4a"></div>
<div class="a" style="left:960.2px;top:396.55px;width:7.0px;height:7.0px;border-radius:50%;background:#f0f0f0"></div>
<div class="t" style="left:950.5px;top:412.55px;width:26.5px;text-align:center;font-size:7px;color:#e0e0e0;transform:scaleX(0.85)">12</div>
<div class="a" style="left:977.0px;top:387.55px;width:26.5px;height:32.9px;background:#575757;border-right:1px solid #4a4a4a;border-bottom:1px solid #4a4a4a"></div>
<div class="a" style="left:986.0px;top:395.85px;width:8.4px;height:8.4px;border-radius:50%;background:#f0f0f0"></div>
<div class="t" style="left:977.0px;top:412.55px;width:26.5px;text-align:center;font-size:7px;color:#e0e0e0;transform:scaleX(0.85)">15</div>
<div class="a" style="left:871.0px;top:420.5px;width:26.5px;height:32.9px;background:#575757;border-right:1px solid #4a4a4a;border-bottom:1px solid #4a4a4a"></div>
<div class="a" style="left:878.6px;top:427.4px;width:11.2px;height:11.2px;border-radius:50%;background:#f0f0f0"></div>
<div class="t" style="left:871.0px;top:445.5px;width:26.5px;text-align:center;font-size:7px;color:#e0e0e0;transform:scaleX(0.85)">20</div>
<div class="a" style="left:897.5px;top:420.5px;width:26.5px;height:32.9px;background:#575757;border-right:1px solid #4a4a4a;border-bottom:1px solid #4a4a4a"></div>
<div class="a" style="left:903.9000000000001px;top:426.2px;width:13.6px;height:13.6px;border-radius:50%;background:#f0f0f0"></div>
<div class="t" style="left:897.5px;top:445.5px;width:26.5px;text-align:center;font-size:7px;color:#e0e0e0;transform:scaleX(0.85)">25</div>
<div class="a" style="left:924.0px;top:420.5px;width:26.5px;height:32.9px;background:#575757;border-right:1px solid #4a4a4a;border-bottom:1px solid #4a4a4a"></div>
<div class="a" style="left:929.0px;top:424.8px;width:16.4px;height:16.4px;border-radius:50%;background:#f0f0f0"></div>
<div class="t" style="left:924.0px;top:445.5px;width:26.5px;text-align:center;font-size:7px;color:#e0e0e0;transform:scaleX(0.85)">30</div>
<div class="a" style="left:950.5px;top:420.5px;width:26.5px;height:32.9px;background:#575757;border-right:1px solid #4a4a4a;border-bottom:1px solid #4a4a4a"></div>
<div class="a" style="left:955.4000000000001px;top:424.7px;width:16.6px;height:16.6px;border-radius:50%;background:#f0f0f0"></div>
<div class="t" style="left:950.5px;top:445.5px;width:26.5px;text-align:center;font-size:7px;color:#e0e0e0;transform:scaleX(0.85)">40</div>
<div class="a" style="left:977.0px;top:420.5px;width:26.5px;height:32.9px;background:#575757;border-right:1px solid #4a4a4a;border-bottom:1px solid #4a4a4a"></div>
<div class="a" style="left:981.9000000000001px;top:424.7px;width:16.6px;height:16.6px;border-radius:50%;background:#f0f0f0"></div>
<div class="t" style="left:977.0px;top:445.5px;width:26.5px;text-align:center;font-size:7px;color:#e0e0e0;transform:scaleX(0.85)">50</div>
<div class="a" style="left:871.0px;top:453.45000000000005px;width:26.5px;height:32.9px;background:#575757;border-right:1px solid #4a4a4a;border-bottom:1px solid #4a4a4a"></div>
<div class="a" style="left:876.4000000000001px;top:458.15000000000003px;width:15.6px;height:15.6px;border-radius:50%;background:#f0f0f0"></div>
<div class="t" style="left:871.0px;top:478.45000000000005px;width:26.5px;text-align:center;font-size:7px;color:#e0e0e0;transform:scaleX(0.85)">70</div>
<div class="a" style="left:897.5px;top:453.45000000000005px;width:26.5px;height:32.9px;background:#575757;border-right:1px solid #4a4a4a;border-bottom:1px solid #4a4a4a"></div>
<div class="a" style="left:902.9000000000001px;top:458.15000000000003px;width:15.6px;height:15.6px;border-radius:50%;background:#f0f0f0"></div>
<div class="t" style="left:897.5px;top:478.45000000000005px;width:26.5px;text-align:center;font-size:7px;color:#e0e0e0;transform:scaleX(0.85)">100</div>
<div class="a" style="left:924.0px;top:453.45000000000005px;width:26.5px;height:32.9px;background:#575757;border-right:1px solid #4a4a4a;border-bottom:1px solid #4a4a4a"></div>
<div class="a" style="left:929.4000000000001px;top:458.15000000000003px;width:15.6px;height:15.6px;border-radius:50%;background:#f0f0f0"></div>
<div class="t" style="left:924.0px;top:478.45000000000005px;width:26.5px;text-align:center;font-size:7px;color:#e0e0e0;transform:scaleX(0.85)">150</div>
<div class="a" style="left:950.5px;top:453.45000000000005px;width:26.5px;height:32.9px;background:#575757;border-right:1px solid #4a4a4a;border-bottom:1px solid #4a4a4a"></div>
<div class="a" style="left:955.9000000000001px;top:458.15000000000003px;width:15.6px;height:15.6px;border-radius:50%;background:#f0f0f0"></div>
<div class="t" style="left:950.5px;top:478.45000000000005px;width:26.5px;text-align:center;font-size:7px;color:#e0e0e0;transform:scaleX(0.85)">200</div>
<div class="a" style="left:977.0px;top:453.45000000000005px;width:26.5px;height:32.9px;background:#575757;border-right:1px solid #4a4a4a;border-bottom:1px solid #4a4a4a"></div>
<div class="a" style="left:982.4000000000001px;top:458.15000000000003px;width:15.6px;height:15.6px;border-radius:50%;background:#f0f0f0"></div>
<div class="t" style="left:977.0px;top:478.45000000000005px;width:26.5px;text-align:center;font-size:7px;color:#e0e0e0;transform:scaleX(0.85)">300</div>
<div class="a" style="left:871.0px;top:486.40000000000003px;width:26.5px;height:32.9px;background:#575757;border-right:1px solid #4a4a4a;border-bottom:1px solid #4a4a4a"></div>
<div class="a" style="left:876.4000000000001px;top:491.1px;width:15.6px;height:15.6px;border-radius:50%;background:#f0f0f0"></div>
<div class="t" style="left:871.0px;top:511.40000000000003px;width:26.5px;text-align:center;font-size:7px;color:#e0e0e0;transform:scaleX(0.85)">400</div>
<div class="a" style="left:897.5px;top:486.40000000000003px;width:26.5px;height:32.9px;background:#575757;border-right:1px solid #4a4a4a;border-bottom:1px solid #4a4a4a"></div>
<div class="a" style="left:902.9000000000001px;top:491.1px;width:15.6px;height:15.6px;border-radius:50%;background:#f0f0f0"></div>
<div class="t" style="left:897.5px;top:511.40000000000003px;width:26.5px;text-align:center;font-size:7px;color:#e0e0e0;transform:scaleX(0.85)">500</div>
<div class="a" style="left:924.0px;top:486.40000000000003px;width:26.5px;height:32.9px;background:#575757;border-right:1px solid #4a4a4a;border-bottom:1px solid #4a4a4a"></div>
<div class="a" style="left:929.4000000000001px;top:491.1px;width:15.6px;height:15.6px;border-radius:50%;background:#f0f0f0"></div>
<div class="t" style="left:924.0px;top:511.40000000000003px;width:26.5px;text-align:center;font-size:7px;color:#e0e0e0;transform:scaleX(0.85)">700</div>
<div class="a" style="left:950.5px;top:486.40000000000003px;width:26.5px;height:32.9px;background:#575757;border-right:1px solid #4a4a4a;border-bottom:1px solid #4a4a4a"></div>
<div class="a" style="left:955.9000000000001px;top:491.1px;width:15.6px;height:15.6px;border-radius:50%;background:#f0f0f0"></div>
<div class="t" style="left:950.5px;top:511.40000000000003px;width:26.5px;text-align:center;font-size:7px;color:#e0e0e0;transform:scaleX(0.85)">1000</div>
<div class="a" style="left:1013px;top:354px;width:8px;height:181px;background:#333"></div>
<svg style="left:1013px;top:354px" width="8" height="8"><path d="M1.5 6h5L4 2.5z" fill="#bbb"/></svg>
<div class="a" style="left:1013.5px;top:362px;width:7px;height:163px;background:#5e5e5e;border-radius:3px"></div>
<svg style="left:1013px;top:527px" width="8" height="8"><path d="M1.5 2h5L4 5.5z" fill="#bbb"/></svg>
<svg style="left:0;top:0" width="1024" height="576" viewBox="0 0 1024 576"><defs><radialGradient id="glow"><stop offset="0" stop-color="#8cf08c" stop-opacity=".75"/><stop offset="1" stop-color="#8cf08c" stop-opacity="0"/></radialGradient></defs>
<path d="M215.0 290.0C214.8 293.7 213.0 305.0 213.5 312.0C214.0 319.0 215.9 324.5 218.0 332.0C220.1 339.5 223.0 349.7 226.0 357.0C229.0 364.3 231.9 370.4 236.0 376.0C240.1 381.6 245.0 386.7 250.5 390.5C256.0 394.3 262.2 396.5 268.8 399.0C275.4 401.5 283.5 403.8 290.0 405.5C296.5 407.2 302.8 408.2 308.0 409.5C313.2 410.8 319.2 412.6 321.5 413.2L305 437L376 446C371.7 442.6 358.5 431.6 350.3 425.6C342.1 419.6 334.7 415.7 326.9 410.0C319.1 404.3 311.2 396.6 303.4 391.2C295.6 385.9 286.6 381.7 280.0 378.0C273.4 374.3 269.2 372.3 264.0 369.0C258.8 365.7 253.0 362.0 249.0 358.0C245.0 354.0 242.7 349.7 240.0 345.0C237.3 340.3 236.0 337.0 233.0 330.0C230.0 323.0 225.0 309.7 222.0 303.0C219.0 296.3 216.2 292.2 215.0 290.0Z" fill="#fdd5c7"/>
<path d="M516.0 126.0C519.7 130.3 531.4 141.9 538.0 152.0C544.6 162.1 550.3 175.8 555.5 186.8C560.7 197.8 565.8 207.6 569.4 218.0C573.0 228.4 575.4 239.8 577.0 249.3C578.6 258.8 578.8 266.6 579.0 275.0C579.2 283.4 579.1 293.8 578.5 300.0C577.9 306.2 576.7 306.2 575.4 312.0C574.1 317.8 573.7 328.0 570.7 335.0C567.7 342.0 564.3 348.0 557.3 354.0C550.3 360.0 538.1 365.2 528.6 371.0C519.1 376.8 508.2 382.4 500.0 389.0C491.8 395.6 482.8 406.8 479.3 410.3L484 438L492 434C489.9 430.1 478.6 415.0 479.3 410.3C480.1 405.6 489.7 407.9 496.5 405.8C503.3 403.7 510.9 401.0 520.0 397.5C529.1 394.0 542.1 388.7 551.2 384.6C560.4 380.5 568.3 377.1 575.0 373.0C581.7 368.9 586.7 365.2 591.2 360.0C595.8 354.8 599.5 348.2 602.2 341.7C604.9 335.2 606.4 327.8 607.6 320.8C608.8 313.9 609.2 308.3 609.4 300.0C609.6 291.7 609.6 281.2 608.8 271.2C607.9 261.2 606.1 248.3 604.5 240.0C602.9 231.7 601.6 228.2 599.2 221.7C596.8 215.2 593.7 207.8 590.3 200.8C586.9 193.9 584.1 188.3 578.6 180.0C573.1 171.7 565.1 159.6 557.0 151.2C548.9 142.9 534.5 133.5 530.0 130.0Z" fill="#fdd5c7"/>
<path d="M415 100 C435 99 455 101 475 106 C455 108 435 106 415 104Z" fill="#fcece6"/>
<circle cx="282.3" cy="278.4" r="59.5" fill="#e2f75e"/>
<circle cx="515.5" cy="276.3" r="59.2" fill="#e2f75e"/>
<circle cx="316.1" cy="247.5" r="37.2" fill="#5b6b55"/>
<path d="M497.6 251.2C497.6 253.4 497.5 255.5 497.2 257.6C496.8 259.6 496.3 261.7 495.7 263.7C495.1 265.7 494.2 267.7 493.3 269.5C492.4 271.4 491.3 273.2 490.0 274.9C488.8 276.6 487.4 278.3 486.0 279.7C484.5 281.2 482.9 282.6 481.2 283.9C479.5 285.1 477.7 286.2 475.9 287.2C474.0 288.1 472.1 288.9 470.1 289.6C468.1 290.2 466.0 290.7 464.0 291.1C461.9 291.4 459.8 291.6 457.8 291.6C455.7 291.6 453.6 291.4 451.5 291.1C449.5 290.7 447.4 290.2 445.4 289.6C443.4 288.9 441.5 288.1 439.6 287.2C437.8 286.2 436.0 285.1 434.3 283.9C432.6 282.6 431.0 281.2 429.5 279.7C428.1 278.3 426.7 276.6 425.5 274.9C424.2 273.2 423.1 271.4 422.2 269.5C421.3 267.7 420.4 265.7 419.8 263.7C419.2 261.7 418.7 259.6 418.3 257.6C418.0 255.5 417.9 253.4 417.9 251.2C417.8 249.1 417.8 247.0 418.0 244.9C418.2 242.8 418.6 240.7 419.0 238.5C419.5 236.4 420.0 234.3 420.8 232.2C421.6 230.2 422.5 228.1 423.7 226.3C425.0 224.5 426.4 222.8 428.1 221.3C429.7 219.8 431.6 218.6 433.4 217.5C435.3 216.4 437.3 215.5 439.3 214.7C441.3 213.9 443.3 213.2 445.3 212.7C447.4 212.1 449.4 211.7 451.5 211.4C453.6 211.1 455.7 210.9 457.8 210.9C459.8 210.9 461.9 211.1 464.0 211.4C466.0 211.8 468.1 212.3 470.1 212.9C472.1 213.6 474.0 214.4 475.9 215.3C477.7 216.3 479.5 217.4 481.2 218.6C482.9 219.9 484.5 221.3 486.0 222.8C487.4 224.2 488.8 225.9 490.0 227.6C491.3 229.3 492.4 231.1 493.3 233.0C494.2 234.8 495.1 236.8 495.7 238.8C496.3 240.8 496.8 242.9 497.2 244.9C497.5 247.0 497.6 249.1 497.6 251.2Z" fill="#5b6b55"/>
<path d="M246 266 C247 268 249 269 252 269 L276.5 269.3 C279 270 280 271.5 278 274 C272 283 262 292 256 302 C253 308 255 313 262 315 C272 318 282 319 292 320" fill="none" stroke="#f2fbc2" stroke-width="2.7" stroke-linecap="round"/>
<path d="M524 267.5 C530 268 538 268 541 269.5 C544 271 541 276 538 280 C532 287 524 292 521 299 C519 305 523 309 530 310 C538 311 545 311.5 550.5 311.5" fill="none" stroke="#f2fbc2" stroke-width="2.6" stroke-linecap="round"/>
<path d="M358.8 346 C355.5 349 354.5 353.5 358 355.8 C362 358 366 355.5 370 355.8 C376 356.2 378 361 383 361 C388 361 391 358.5 393.5 355.7" fill="none" stroke="#4d5249" stroke-width="2.3" stroke-linecap="round"/>
<path d="M303.8 436.0 L322.0 412.5 C319.7 412.0 313.3 410.7 308.0 409.5C302.7 408.3 296.5 407.2 290.0 405.5C283.5 403.8 275.4 401.5 268.8 399.0C262.2 396.5 256.0 394.3 250.5 390.5C245.0 386.7 240.1 381.6 236.0 376.0C231.9 370.4 229.0 364.3 226.0 357.0C223.0 349.7 220.1 339.5 218.0 332.0C215.9 324.5 214.8 319.2 213.5 312.0C212.2 304.8 210.8 298.0 210.4 288.8C210.0 279.6 209.9 267.4 211.1 256.8C212.3 246.2 214.3 235.3 217.4 225.0C220.5 214.7 224.6 204.3 229.6 194.7C234.6 185.1 240.7 175.7 247.4 167.2C254.1 158.7 261.8 150.7 270.0 143.5C278.2 136.3 287.1 129.9 296.4 124.3C305.6 118.7 315.5 113.8 325.5 109.8C335.5 105.8 345.9 102.6 356.3 100.1C366.7 97.6 377.4 95.9 388.0 94.9C398.6 93.9 409.4 93.7 420.0 94.2C430.6 94.7 441.4 95.8 451.9 97.8C462.4 99.8 472.9 102.5 483.0 106.1C493.1 109.7 503.2 114.0 512.7 119.2C522.2 124.4 531.4 130.4 539.9 137.1C548.4 143.8 556.4 151.4 563.6 159.6C570.8 167.8 577.3 176.7 582.9 186.0C588.5 195.3 593.2 205.3 597.0 215.4C600.8 225.5 603.7 236.1 605.8 246.6C607.9 257.1 609.0 268.0 609.4 278.6C609.8 289.2 609.3 300.0 608.2 310.5C607.1 321.0 605.6 333.6 602.8 341.8C600.0 350.1 595.9 354.8 591.2 360.0C586.6 365.2 581.7 368.9 575.0 373.0C568.3 377.1 560.4 380.5 551.2 384.6C542.1 388.7 529.1 394.0 520.0 397.5C510.9 401.0 503.3 403.7 496.5 405.8C489.7 407.9 482.2 409.6 479.3 410.3C480.0 412.1 481.6 416.8 483.6 421.2C485.6 425.7 490.1 433.3 491.2 436.9C492.4 440.5 490.4 442.0 490.2 443.0C485.5 443.8 473.7 446.5 462.0 447.5C450.3 448.5 434.7 448.9 420.0 449.0C405.3 449.1 386.6 448.6 373.7 447.8C360.8 447.1 351.3 445.5 342.5 444.5C333.7 443.5 327.4 443.4 321.0 442.0C314.6 440.6 306.7 437.0 303.8 436.0Z" fill="none" stroke="#5b6b55" stroke-width="11.2" stroke-linejoin="round" stroke-linecap="round"/>
<ellipse cx="440" cy="122" rx="13" ry="13" fill="url(#glow)"/>
<path d="M447 93.5 C451 89 456 87 460.5 87.3 C465.5 87.8 469.5 91 469.2 96" fill="none" stroke="#5b6b55" stroke-width="4" stroke-linecap="round"/>
<path d="M442.5 97 C441 104 439.5 110 438 115.5" fill="none" stroke="#4d6a48" stroke-width="4" stroke-linecap="round"/>
<ellipse cx="435.6" cy="123.3" rx="5" ry="7.8" transform="rotate(18 435.6 123.3)" fill="#a4eca0" stroke="#3d6a3a" stroke-width="2.4"/>
<ellipse cx="445.5" cy="120.3" rx="6.8" ry="4.2" transform="rotate(35 445.5 120.3)" fill="#a4eca0" stroke="#3d6a3a" stroke-width="2.4"/>
</svg>
<div class="a" style="left:898px;top:79px;width:99px;height:75px;overflow:hidden"><svg style="left:0;top:0" width="99" height="75"><g transform="translate(-898 -79) translate(909.2 87.6) scale(0.081)"><defs><radialGradient id="glow2"><stop offset="0" stop-color="#8cf08c" stop-opacity=".75"/><stop offset="1" stop-color="#8cf08c" stop-opacity="0"/></radialGradient></defs>
<path d="M215.0 290.0C214.8 293.7 213.0 305.0 213.5 312.0C214.0 319.0 215.9 324.5 218.0 332.0C220.1 339.5 223.0 349.7 226.0 357.0C229.0 364.3 231.9 370.4 236.0 376.0C240.1 381.6 245.0 386.7 250.5 390.5C256.0 394.3 262.2 396.5 268.8 399.0C275.4 401.5 283.5 403.8 290.0 405.5C296.5 407.2 302.8 408.2 308.0 409.5C313.2 410.8 319.2 412.6 321.5 413.2L305 437L376 446C371.7 442.6 358.5 431.6 350.3 425.6C342.1 419.6 334.7 415.7 326.9 410.0C319.1 404.3 311.2 396.6 303.4 391.2C295.6 385.9 286.6 381.7 280.0 378.0C273.4 374.3 269.2 372.3 264.0 369.0C258.8 365.7 253.0 362.0 249.0 358.0C245.0 354.0 242.7 349.7 240.0 345.0C237.3 340.3 236.0 337.0 233.0 330.0C230.0 323.0 225.0 309.7 222.0 303.0C219.0 296.3 216.2 292.2 215.0 290.0Z" fill="#fdd5c7"/>
<path d="M516.0 126.0C519.7 130.3 531.4 141.9 538.0 152.0C544.6 162.1 550.3 175.8 555.5 186.8C560.7 197.8 565.8 207.6 569.4 218.0C573.0 228.4 575.4 239.8 577.0 249.3C578.6 258.8 578.8 266.6 579.0 275.0C579.2 283.4 579.1 293.8 578.5 300.0C577.9 306.2 576.7 306.2 575.4 312.0C574.1 317.8 573.7 328.0 570.7 335.0C567.7 342.0 564.3 348.0 557.3 354.0C550.3 360.0 538.1 365.2 528.6 371.0C519.1 376.8 508.2 382.4 500.0 389.0C491.8 395.6 482.8 406.8 479.3 410.3L484 438L492 434C489.9 430.1 478.6 415.0 479.3 410.3C480.1 405.6 489.7 407.9 496.5 405.8C503.3 403.7 510.9 401.0 520.0 397.5C529.1 394.0 542.1 388.7 551.2 384.6C560.4 380.5 568.3 377.1 575.0 373.0C581.7 368.9 586.7 365.2 591.2 360.0C595.8 354.8 599.5 348.2 602.2 341.7C604.9 335.2 606.4 327.8 607.6 320.8C608.8 313.9 609.2 308.3 609.4 300.0C609.6 291.7 609.6 281.2 608.8 271.2C607.9 261.2 606.1 248.3 604.5 240.0C602.9 231.7 601.6 228.2 599.2 221.7C596.8 215.2 593.7 207.8 590.3 200.8C586.9 193.9 584.1 188.3 578.6 180.0C573.1 171.7 565.1 159.6 557.0 151.2C548.9 142.9 534.5 133.5 530.0 130.0Z" fill="#fdd5c7"/>
<path d="M415 100 C435 99 455 101 475 106 C455 108 435 106 415 104Z" fill="#fcece6"/>
<circle cx="282.3" cy="278.4" r="59.5" fill="#e2f75e"/>
<circle cx="515.5" cy="276.3" r="59.2" fill="#e2f75e"/>
<circle cx="316.1" cy="247.5" r="37.2" fill="#5b6b55"/>
<path d="M497.6 251.2C497.6 253.4 497.5 255.5 497.2 257.6C496.8 259.6 496.3 261.7 495.7 263.7C495.1 265.7 494.2 267.7 493.3 269.5C492.4 271.4 491.3 273.2 490.0 274.9C488.8 276.6 487.4 278.3 486.0 279.7C484.5 281.2 482.9 282.6 481.2 283.9C479.5 285.1 477.7 286.2 475.9 287.2C474.0 288.1 472.1 288.9 470.1 289.6C468.1 290.2 466.0 290.7 464.0 291.1C461.9 291.4 459.8 291.6 457.8 291.6C455.7 291.6 453.6 291.4 451.5 291.1C449.5 290.7 447.4 290.2 445.4 289.6C443.4 288.9 441.5 288.1 439.6 287.2C437.8 286.2 436.0 285.1 434.3 283.9C432.6 282.6 431.0 281.2 429.5 279.7C428.1 278.3 426.7 276.6 425.5 274.9C424.2 273.2 423.1 271.4 422.2 269.5C421.3 267.7 420.4 265.7 419.8 263.7C419.2 261.7 418.7 259.6 418.3 257.6C418.0 255.5 417.9 253.4 417.9 251.2C417.8 249.1 417.8 247.0 418.0 244.9C418.2 242.8 418.6 240.7 419.0 238.5C419.5 236.4 420.0 234.3 420.8 232.2C421.6 230.2 422.5 228.1 423.7 226.3C425.0 224.5 426.4 222.8 428.1 221.3C429.7 219.8 431.6 218.6 433.4 217.5C435.3 216.4 437.3 215.5 439.3 214.7C441.3 213.9 443.3 213.2 445.3 212.7C447.4 212.1 449.4 211.7 451.5 211.4C453.6 211.1 455.7 210.9 457.8 210.9C459.8 210.9 461.9 211.1 464.0 211.4C466.0 211.8 468.1 212.3 470.1 212.9C472.1 213.6 474.0 214.4 475.9 215.3C477.7 216.3 479.5 217.4 481.2 218.6C482.9 219.9 484.5 221.3 486.0 222.8C487.4 224.2 488.8 225.9 490.0 227.6C491.3 229.3 492.4 231.1 493.3 233.0C494.2 234.8 495.1 236.8 495.7 238.8C496.3 240.8 496.8 242.9 497.2 244.9C497.5 247.0 497.6 249.1 497.6 251.2Z" fill="#5b6b55"/>
<path d="M246 266 C247 268 249 269 252 269 L276.5 269.3 C279 270 280 271.5 278 274 C272 283 262 292 256 302 C253 308 255 313 262 315 C272 318 282 319 292 320" fill="none" stroke="#f2fbc2" stroke-width="2.7" stroke-linecap="round"/>
<path d="M524 267.5 C530 268 538 268 541 269.5 C544 271 541 276 538 280 C532 287 524 292 521 299 C519 305 523 309 530 310 C538 311 545 311.5 550.5 311.5" fill="none" stroke="#f2fbc2" stroke-width="2.6" stroke-linecap="round"/>
<path d="M358.8 346 C355.5 349 354.5 353.5 358 355.8 C362 358 366 355.5 370 355.8 C376 356.2 378 361 383 361 C388 361 391 358.5 393.5 355.7" fill="none" stroke="#4d5249" stroke-width="2.3" stroke-linecap="round"/>
<path d="M303.8 436.0 L322.0 412.5 C319.7 412.0 313.3 410.7 308.0 409.5C302.7 408.3 296.5 407.2 290.0 405.5C283.5 403.8 275.4 401.5 268.8 399.0C262.2 396.5 256.0 394.3 250.5 390.5C245.0 386.7 240.1 381.6 236.0 376.0C231.9 370.4 229.0 364.3 226.0 357.0C223.0 349.7 220.1 339.5 218.0 332.0C215.9 324.5 214.8 319.2 213.5 312.0C212.2 304.8 210.8 298.0 210.4 288.8C210.0 279.6 209.9 267.4 211.1 256.8C212.3 246.2 214.3 235.3 217.4 225.0C220.5 214.7 224.6 204.3 229.6 194.7C234.6 185.1 240.7 175.7 247.4 167.2C254.1 158.7 261.8 150.7 270.0 143.5C278.2 136.3 287.1 129.9 296.4 124.3C305.6 118.7 315.5 113.8 325.5 109.8C335.5 105.8 345.9 102.6 356.3 100.1C366.7 97.6 377.4 95.9 388.0 94.9C398.6 93.9 409.4 93.7 420.0 94.2C430.6 94.7 441.4 95.8 451.9 97.8C462.4 99.8 472.9 102.5 483.0 106.1C493.1 109.7 503.2 114.0 512.7 119.2C522.2 124.4 531.4 130.4 539.9 137.1C548.4 143.8 556.4 151.4 563.6 159.6C570.8 167.8 577.3 176.7 582.9 186.0C588.5 195.3 593.2 205.3 597.0 215.4C600.8 225.5 603.7 236.1 605.8 246.6C607.9 257.1 609.0 268.0 609.4 278.6C609.8 289.2 609.3 300.0 608.2 310.5C607.1 321.0 605.6 333.6 602.8 341.8C600.0 350.1 595.9 354.8 591.2 360.0C586.6 365.2 581.7 368.9 575.0 373.0C568.3 377.1 560.4 380.5 551.2 384.6C542.1 388.7 529.1 394.0 520.0 397.5C510.9 401.0 503.3 403.7 496.5 405.8C489.7 407.9 482.2 409.6 479.3 410.3C480.0 412.1 481.6 416.8 483.6 421.2C485.6 425.7 490.1 433.3 491.2 436.9C492.4 440.5 490.4 442.0 490.2 443.0C485.5 443.8 473.7 446.5 462.0 447.5C450.3 448.5 434.7 448.9 420.0 449.0C405.3 449.1 386.6 448.6 373.7 447.8C360.8 447.1 351.3 445.5 342.5 444.5C333.7 443.5 327.4 443.4 321.0 442.0C314.6 440.6 306.7 437.0 303.8 436.0Z" fill="none" stroke="#5b6b55" stroke-width="15" stroke-linejoin="round" stroke-linecap="round"/>
<ellipse cx="440" cy="122" rx="13" ry="13" fill="url(#glow2)"/>
<path d="M447 93.5 C451 89 456 87 460.5 87.3 C465.5 87.8 469.5 91 469.2 96" fill="none" stroke="#5b6b55" stroke-width="4" stroke-linecap="round"/>
<path d="M442.5 97 C441 104 439.5 110 438 115.5" fill="none" stroke="#4d6a48" stroke-width="4" stroke-linecap="round"/>
<ellipse cx="435.6" cy="123.3" rx="5" ry="7.8" transform="rotate(18 435.6 123.3)" fill="#a4eca0" stroke="#3d6a3a" stroke-width="2.4"/>
<ellipse cx="445.5" cy="120.3" rx="6.8" ry="4.2" transform="rotate(35 445.5 120.3)" fill="#a4eca0" stroke="#3d6a3a" stroke-width="2.4"/>
</g></svg></div>
<div class="t" style="left:364px;top:480.5px;font-size:16.3px;color:#68755f;letter-spacing:0px">nguyenthihuonggiang94512</div>
<div class="t" style="left:364px;top:495.5px;font-size:16.3px;color:#68755f;letter-spacing:-0.1px">Hoidap247</div>
<div class="a" style="left:0;top:549px;width:1024px;height:27px;background:#e6e6e6"></div>
<div class="a" style="left:0;top:549px;width:32px;height:27px;background:#dadada"></div>
<svg style="left:10.5px;top:557.5px" width="11" height="11"><path d="M0 .8l4.8-.7v4.9H0zM5.6 0L11 -.6V5H5.6zM0 5.8h4.8v4.9L0 10.1zM5.6 5.8H11v5.8l-5.4-.8z" fill="#1a1a1a"/></svg>
<div class="a" style="left:32px;top:549px;width:229px;height:27px;background:#fff"></div>
<svg style="left:40px;top:556px" width="14" height="14" fill="none" stroke="#222" stroke-width="1.2"><circle cx="8.5" cy="5.5" r="4"/><path d="M5.5 8.5L1.5 12.5"/></svg>
<div class="t" style="left:59px;top:558.5px;font-size:10px;color:#333">Nhập tại đây để tìm kiếm</div>
<svg style="left:271px;top:557px" width="13" height="11" fill="none" stroke="#333" stroke-width="1.2"><rect x="1" y="2" width="7" height="7"/><path d="M0.5 0.6h8M0.5 10.4h8M11.5 0v2.5M11.5 4v3M11.5 8.5V11"/></svg>
<div class="a" style="left:295px;top:549px;width:32.5px;height:27px;background:#f3f3f3"></div>
<div class="a" style="left:296px;top:574px;width:32px;height:2px;background:#3a3a3a"></div>
<svg style="left:304px;top:555px" width="15" height="15"><circle cx="7" cy="8" r="6" fill="#7cc04a"/><circle cx="7" cy="8" r="3" fill="#f3f3f3"/><circle cx="7" cy="8" r="1.6" fill="#7cc04a"/><path d="M10 5.5 L14 3 L13 7z" fill="#f3f3f3"/><path d="M11.5 1.5v2.5M13 3l-1.5 1.5M14.5 5h-2" stroke="#7cc04a" stroke-width="1"/></svg>
<div class="a" style="left:346px;top:574px;width:27px;height:2px;background:#3a3a3a"></div>
<div class="a" style="left:352px;top:555px;width:14px;height:15px;background:#f4f4f4"></div>
<svg style="left:352px;top:555px" width="14" height="15"><circle cx="7" cy="8.5" r="5.5" fill="#1aa6b8"/><path d="M7 14a5.5 5.5 0 0 1-5.5-5.5h11A5.5 5.5 0 0 1 7 14z" fill="#2b70c8"/><path d="M5 6c0-2.5 2.5-3.5 4.5-4.5-.5 1.5.8 2.5 1.5 4 .6 1.6-.5 3-2.2 3C6.5 8.5 5 7.5 5 6z" fill="#e8402a"/></svg>
<div class="a" style="left:379px;top:574px;width:28px;height:2px;background:#3a3a3a"></div>
<svg style="left:386px;top:556px" width="13" height="13"><path d="M5.5 .8h2l.3 1.7 1.2.5 1.4-1 1.4 1.4-1 1.4.5 1.2 1.7.3v2l-1.7.3-.5 1.2 1 1.4-1.4 1.4-1.4-1-1.2.5-.3 1.7h-2l-.3-1.7-1.2-.5-1.4 1-1.4-1.4 1-1.4-.5-1.2-1.7-.3v-2l1.7-.3.5-1.2-1-1.4 1.4-1.4 1.4 1 1.2-.5z" fill="#333"/><circle cx="6.5" cy="6.5" r="2.3" fill="#e6e6e6"/></svg>
<svg style="left:755px;top:555px" width="14" height="14"><circle cx="7" cy="6" r="4.5" fill="#9cc8ee"/><circle cx="10" cy="7" r="3.5" fill="#bcdcf4"/><path d="M4 11l-1 2M7 11l-1 2M10 11l-1 2" stroke="#3a8ad0" stroke-width="1"/></svg>
<div class="t" style="left:774px;top:559px;font-size:9.5px;color:#222">29°C</div>
<div class="t" style="left:800.5px;top:559px;font-size:9.5px;color:#222">Mưa nhỏ</div>
<svg style="left:849px;top:558px" width="10" height="8" fill="none" stroke="#222" stroke-width="1.1"><path d="M1 6l4-4 4 4"/></svg>
<svg style="left:865px;top:557px" width="12" height="10"><rect x="1" y="2.5" width="9.5" height="5.5" fill="#222"/><rect x="10.5" y="4" width="1" height="2.5" fill="#222"/><path d="M2 1.5h2" stroke="#222"/></svg>
<svg style="left:883px;top:556px" width="10" height="11" fill="none" stroke="#333" stroke-width="1"><path d="M1 10a8 8 0 0 1 8-8M3 10a6 6 0 0 1 6-6M5 10a4 4 0 0 1 4-4M7 10a2 2 0 0 1 2-2"/></svg>
<svg style="left:897px;top:557px" width="17" height="11" fill="none" stroke="#333" stroke-width="1"><rect x="0.5" y="1" width="16" height="8.5"/><path d="M3 4h1M5.5 4h1M8 4h1M10.5 4h1M13 4h1M4 7h9" stroke-width="0.9"/></svg>
<div class="t" style="left:920px;top:559px;font-size:8.4px;color:#222">ENG</div>
<div class="t" style="left:948px;top:552.5px;font-size:8.4px;color:#222">12:49 CH</div>
<div class="t" style="left:943.5px;top:564.5px;font-size:8.4px;color:#222">06/11/2021</div>
<svg style="left:996px;top:554px" width="18" height="18"><path d="M1.5 1.5h11v8h-6l-3 2.5v-2.5h-2z" fill="#222"/><path d="M3.5 4h7M3.5 6h7M3.5 8h5" stroke="#eee" stroke-width=".8"/><circle cx="12" cy="12.5" r="4.3" fill="#eee" stroke="#555" stroke-width=".9"/></svg>
<div class="t" style="left:1006px;top:563px;font-size:7.5px;color:#222">4</div>
<div class="a" style="left:211px;top:525.5px;width:203px;height:24px;background:#fff;border:1px solid #a8a8a8"></div>
<div class="t" style="left:213.5px;top:528.5px;font-size:8.2px;color:#555;letter-spacing:-0.02px">Hỏi đáp môn Âm nhạc, Mỹ thuật, giải bài tập online âm</div>
<div class="t" style="left:213.5px;top:539.3px;font-size:8.2px;color:#555;letter-spacing:-0.02px">nhạc, mỹ thuật cho tất cả các lớp miễn phí - Cốc Cốc</div>
</body></html>
